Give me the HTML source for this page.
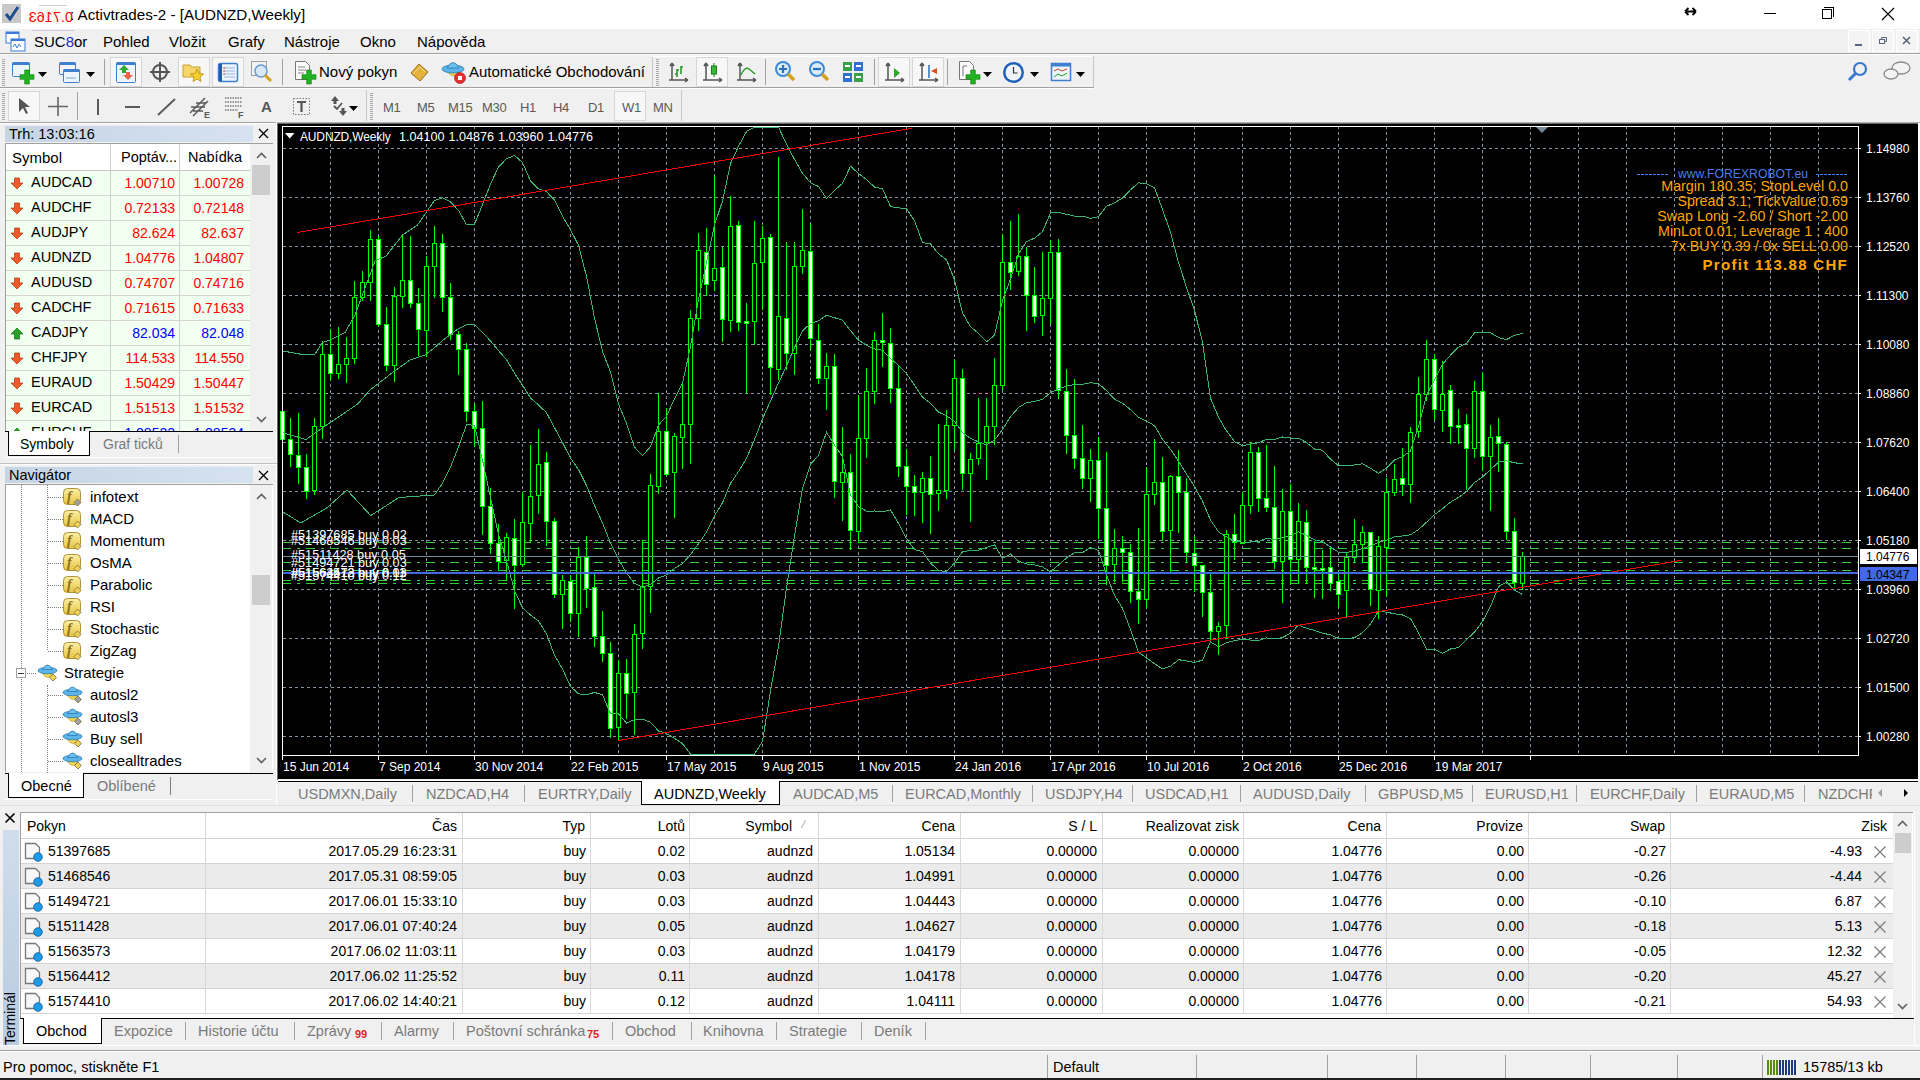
<!DOCTYPE html><html><head><meta charset="utf-8"><style>
*{margin:0;padding:0;box-sizing:border-box}
html,body{width:1920px;height:1080px;overflow:hidden;background:#f0f0f0;font-family:"Liberation Sans",sans-serif;font-size:14px;color:#000}
.a{position:absolute}
.t{position:absolute;white-space:nowrap;line-height:1}
.pb{position:absolute;border:1px solid #d6d6d6;background:#f7f7f7}
.tf{position:absolute;white-space:nowrap;line-height:1;font-size:13px;color:#5a5a5a;letter-spacing:-0.3px}
.sep{position:absolute;width:1px;background:#a0a0a0}
.grip{position:absolute;width:3px;background:repeating-linear-gradient(#a8a8a8 0 1px,transparent 1px 2px)}
</style></head><body>
<div class="a" style="left:0;top:0;width:1920px;height:29px;background:#fff"></div>
<div class="a" style="left:2px;top:4px;width:19px;height:19px;background:#c8c8c8"></div>
<svg class="a" style="left:2px;top:4px" width="19" height="19"><path d="M4 10 L8 15 L16 3" stroke="#1d4f8f" stroke-width="3" fill="none"/></svg>
<div class="a" style="left:30px;top:3px;width:44px;height:24px;background:radial-gradient(#f4f8e8,#fff 70%)"></div>
<div class="a" style="left:39px;top:5px;width:28px;height:1px;background:#d8c8e0"></div><div class="a" style="left:32px;top:30px;width:43px;height:1px;background:#d8c8e0"></div>
<div class="t" style="left:29px;top:10px;font-size:14.5px;color:#f00;transform:scaleX(-1);transform-origin:22px 0">0.7163</div>
<div class="t" style="left:70px;top:7px;font-size:15.2px">: Activtrades-2 - [AUDNZD,Weekly]</div>
<svg class="a" style="left:1684px;top:7px" width="13" height="9"><path d="M1 4.5H12M1 4.5L4.5 1M1 4.5L4.5 8M12 4.5L8.5 1M12 4.5L8.5 8" stroke="#000" stroke-width="1.8" fill="none"/></svg>
<div class="a" style="left:1764px;top:13px;width:12px;height:1px;background:#000"></div>
<div class="a" style="left:1822px;top:9px;width:10px;height:10px;border:1px solid #000;background:#fff"></div><div class="a" style="left:1824px;top:7px;width:10px;height:10px;border-top:1px solid #000;border-right:1px solid #000"></div>
<svg class="a" style="left:1881px;top:7px" width="14" height="14"><path d="M1 1L13 13M13 1L1 13" stroke="#000" stroke-width="1.2"/></svg>
<svg class="a" style="left:5px;top:31px" width="22" height="22"><rect x="1" y="1" width="13" height="11" fill="#fff" stroke="#3b7bd6"/><rect x="1" y="1" width="13" height="2" fill="#3b7bd6"/><rect x="6" y="8" width="14" height="12" fill="#fff" stroke="#3b7bd6"/><rect x="6" y="8" width="14" height="2" fill="#3b7bd6"/><path d="M8 16l2-3 2 4 2-4 2 3" stroke="#3b7bd6" fill="none"/></svg>
<div class="t" style="left:34px;top:34px;font-size:15px">SUC<span style='color:#2030c0'>8</span>or</div>
<div class="t" style="left:103px;top:34px;font-size:15px">Pohled</div>
<div class="t" style="left:169px;top:34px;font-size:15px">Vložit</div>
<div class="t" style="left:228px;top:34px;font-size:15px">Grafy</div>
<div class="t" style="left:284px;top:34px;font-size:15px">Nástroje</div>
<div class="t" style="left:360px;top:34px;font-size:15px">Okno</div>
<div class="t" style="left:417px;top:34px;font-size:15px">Nápověda</div>
<div class="a" style="left:1848px;top:30px;width:22px;height:22px;background:#f4f4f4;border:1px solid #fff"></div>
<div class="a" style="left:1872px;top:30px;width:22px;height:22px;background:#f4f4f4;border:1px solid #fff"></div>
<div class="a" style="left:1896px;top:30px;width:22px;height:22px;background:#f4f4f4;border:1px solid #fff"></div>
<div class="a" style="left:1855px;top:44px;width:7px;height:2px;background:#56657a"></div>
<svg class="a" style="left:1878px;top:35px" width="12" height="12"><rect x="1.5" y="4.5" width="5" height="4" fill="none" stroke="#56657a"/><path d="M3.5 4.5V2.5H8.5V6.5H6.5" fill="none" stroke="#56657a"/></svg>
<svg class="a" style="left:1902px;top:36px" width="10" height="10"><path d="M1 1L8 8M8 1L1 8" stroke="#56657a" stroke-width="1.6"/></svg>
<div class="a" style="left:0;top:53px;width:1920px;height:1px;background:#a0a0a0"></div>
<div class="a" style="left:0;top:54px;width:1920px;height:1px;background:#fff"></div>
<div class="a" style="left:0;top:87px;width:1094px;height:1px;background:#a0a0a0"></div>
<div class="a" style="left:0;top:88px;width:1094px;height:1px;background:#fff"></div>
<div class="a" style="left:0;top:122px;width:1920px;height:1px;background:#a0a0a0"></div><div class="a" style="left:0;top:123px;width:277px;height:1px;background:#fff"></div>
<div class="grip" style="left:2px;top:59px;height:28px"></div>
<div class="grip" style="left:656px;top:59px;height:28px"></div>
<div class="sep" style="left:652px;top:56px;height:31px;background:#c8c8c8"></div>
<div class="sep" style="left:1093px;top:56px;height:31px;background:#c8c8c8"></div>
<div class="a" style="left:652px;top:56px;width:441px;height:1px;background:#fff"></div>
<div class="sep" style="left:104px;top:59px;height:26px"></div>
<div class="sep" style="left:282px;top:59px;height:26px"></div>
<div class="sep" style="left:765px;top:59px;height:26px"></div>
<div class="sep" style="left:874px;top:59px;height:26px"></div>
<div class="sep" style="left:947px;top:59px;height:26px"></div>
<div class="pb" style="left:110px;top:57px;width:32px;height:30px"></div>
<div class="pb" style="left:178px;top:57px;width:32px;height:30px"></div>
<div class="pb" style="left:212px;top:57px;width:32px;height:30px"></div>
<div class="pb" style="left:696px;top:57px;width:32px;height:30px"></div>
<div class="pb" style="left:878px;top:57px;width:32px;height:30px"></div>
<div class="pb" style="left:912px;top:57px;width:32px;height:30px"></div>
<svg class="a" style="left:11px;top:61px" width="24" height="24"><rect x="1.5" y="1.5" width="17" height="14" rx="1" fill="#eef4fc" stroke="#3f7fd0"/><rect x="1.5" y="1.5" width="17" height="2.5" fill="#3f7fd0"/><path d="M13.666666666666668 9h4.666666666666667v4.666666666666667h4.666666666666667v4.666666666666667h-4.666666666666667v4.666666666666667h-4.666666666666667v-4.666666666666667h-4.666666666666667v-4.666666666666667h4.666666666666667z" fill="#22b222" stroke="#0d7a0d" stroke-width=".6"/></svg>
<svg class="a" style="left:38px;top:72px" width="9" height="5"><path d="M0 0H9L4.5 5Z" fill="#000"/></svg>
<svg class="a" style="left:58px;top:61px" width="24" height="24"><rect x="1.5" y="1.5" width="16" height="12" rx="1" fill="#eef4fc" stroke="#3f7fd0"/><rect x="1.5" y="1.5" width="16" height="2.5" fill="#3f7fd0"/><rect x="5.5" y="8.5" width="16" height="13" rx="1" fill="#eef4fc" stroke="#3f7fd0"/><rect x="5.5" y="8.5" width="16" height="2.5" fill="#3f7fd0"/><path d="M8 17h10" stroke="#7da6d8"/></svg>
<svg class="a" style="left:86px;top:72px" width="9" height="5"><path d="M0 0H9L4.5 5Z" fill="#000"/></svg>
<svg class="a" style="left:114px;top:61px" width="24" height="24"><rect x="2.5" y="1.5" width="19" height="20" rx="1" fill="#eef4fc" stroke="#3f7fd0"/><rect x="2.5" y="1.5" width="19" height="2.5" fill="#3f7fd0"/><path d="M10 4l-5 5h3v3h4V9h3z" fill="#2fa82f"/><path d="M14 19l5-5h-3v-3h-4v3H9z" fill="#f0643c"/></svg>
<svg class="a" style="left:149px;top:61px" width="22" height="22"><circle cx="11" cy="11" r="7" fill="none" stroke="#555" stroke-width="2"/><path d="M11 1v20M1 11h20" stroke="#555" stroke-width="2"/></svg>
<svg class="a" style="left:182px;top:61px" width="24" height="24"><path d="M1 4h7l2 2h8v10H1z" fill="#f5d66a" stroke="#c9a22a"/><path d="M15 8l2 4.5 4.5.5-3.5 3 1 4.5-4-2.5-4 2.5 1-4.5-3.5-3 4.5-.5z" fill="#f3d12a" stroke="#b88a10" stroke-width=".8"/></svg>
<svg class="a" style="left:216px;top:61px" width="24" height="24"><rect x="2.5" y="2.5" width="19" height="18" rx="2" fill="#eef4fc" stroke="#3f7fd0" stroke-width="1.5"/><rect x="3" y="3" width="3" height="17" fill="#1f5ba8"/><path d="M8 7h11M8 10h11M8 13h11M8 16h11" stroke="#9ab8e0"/><path d="M7 7h2M7 10h2M7 13h2" stroke="#e04040"/></svg>
<svg class="a" style="left:250px;top:60px" width="24" height="25"><rect x="1.5" y="1.5" width="15" height="14" fill="#f2f2f2" stroke="#a0a0a0"/><circle cx="11" cy="11" r="6" fill="#d8e8f6" stroke="#6a9ad0" stroke-width="1.5"/><path d="M15 15l6 6" stroke="#d4a020" stroke-width="3"/></svg>
<svg class="a" style="left:293px;top:60px" width="24" height="25"><path d="M2.5 1.5h10l4 4v14h-14z" fill="#fafafa" stroke="#777"/><path d="M5 7h7M5 10h8M5 13h6" stroke="#888"/><path d="M13.666666666666668 10h4.666666666666667v4.666666666666667h4.666666666666667v4.666666666666667h-4.666666666666667v4.666666666666667h-4.666666666666667v-4.666666666666667h-4.666666666666667v-4.666666666666667h4.666666666666667z" fill="#22b222" stroke="#0d7a0d" stroke-width=".6"/></svg>
<div class="t" style="left:319px;top:64px;font-size:15px">Nový pokyn</div>
<svg class="a" style="left:408px;top:61px" width="22" height="22"><path d="M3 12l8-9 9 8-8 9z" fill="#e2b23a" stroke="#9a6f10"/><path d="M5 13l7-7 5 5" stroke="#f7dd85" fill="none"/></svg>
<svg class="a" style="left:441px;top:59px" width="26" height="26"><path d="M6 12q7 10 13 0z" fill="#f3d84a" stroke="#b09030" stroke-width=".7"/><ellipse cx="12" cy="10" rx="11" ry="4" fill="#5db4e8" stroke="#2a7ab0" stroke-width=".8"/><path d="M6 9q6-11 12 0z" fill="#6cc0f0" stroke="#2a7ab0" stroke-width=".8"/><circle cx="19" cy="19" r="5.5" fill="#e53030" stroke="#a01010" stroke-width=".6"/><rect x="17" y="17" width="4" height="4" fill="#fff"/></svg>
<div class="t" style="left:469px;top:64px;font-size:15px">Automatické Obchodování</div>
<svg class="a" style="left:668px;top:61px" width="22" height="22"><path d="M4 2v17M1 19h19M4 2l-2 3M4 2l2 3M20 19l-3-2M20 19l-3 2" stroke="#555" stroke-width="1.5" fill="none"/><path d="M9 8v8M9 13h-2M9 9h2M13 5v8M13 6h2" stroke="#2a9a2a" stroke-width="1.6"/></svg>
<svg class="a" style="left:702px;top:61px" width="22" height="22"><path d="M4 2v17M1 19h19M4 2l-2 3M4 2l2 3M20 19l-3-2M20 19l-3 2" stroke="#555" stroke-width="1.5" fill="none"/><path d="M12 2v14" stroke="#1a7a1a"/><rect x="9.5" y="5" width="5" height="8" fill="#38b838" stroke="#1a7a1a"/></svg>
<svg class="a" style="left:736px;top:61px" width="22" height="22"><path d="M4 2v17M1 19h19M4 2l-2 3M4 2l2 3M20 19l-3-2M20 19l-3 2" stroke="#555" stroke-width="1.5" fill="none"/><path d="M5 14q4-9 8-6t6 5" stroke="#2a9a2a" stroke-width="1.5" fill="none"/></svg>
<svg class="a" style="left:774px;top:60px" width="24" height="24"><circle cx="9" cy="9" r="7" fill="#d9ecfb" stroke="#3f8ad8" stroke-width="2"/><path d="M5 9h8M9 5v8" stroke="#2a6fc0" stroke-width="2.2"/><path d="M14 14l6 6" stroke="#d4a020" stroke-width="3.5"/></svg>
<svg class="a" style="left:808px;top:60px" width="24" height="24"><circle cx="9" cy="9" r="7" fill="#d9ecfb" stroke="#3f8ad8" stroke-width="2"/><path d="M5 9h8" stroke="#2a6fc0" stroke-width="2.2"/><path d="M14 14l6 6" stroke="#d4a020" stroke-width="3.5"/></svg>
<svg class="a" style="left:842px;top:61px" width="22" height="22"><rect x="1" y="1" width="9" height="9" fill="#3aa04a"/><rect x="12" y="1" width="9" height="9" fill="#2f6fd0"/><rect x="1" y="12" width="9" height="9" fill="#2f6fd0"/><rect x="12" y="12" width="9" height="9" fill="#3aa04a"/><path d="M3 5h5M14 5h5M3 16h5M14 16h5" stroke="#fff" stroke-width="2"/></svg>
<svg class="a" style="left:884px;top:61px" width="22" height="22"><path d="M4 2v17M1 19h19M4 2l-2 3M4 2l2 3M20 19l-3-2M20 19l-3 2" stroke="#555" stroke-width="1.5" fill="none"/><path d="M10 7l6 5-6 5z" fill="#2aa82a"/></svg>
<svg class="a" style="left:918px;top:61px" width="22" height="22"><path d="M4 2v17M1 19h19M4 2l-2 3M4 2l2 3M20 19l-3-2M20 19l-3 2" stroke="#555" stroke-width="1.5" fill="none"/><path d="M11 4v13" stroke="#2a6fc0" stroke-width="1.5"/><path d="M13 10l6-3v6z" fill="#e05020"/></svg>
<svg class="a" style="left:957px;top:60px" width="24" height="25"><path d="M2.5 1.5h10l4 4v14h-14z" fill="#fafafa" stroke="#777"/><path d="M6 6h4M6 6v10" stroke="#777"/><path d="M13.666666666666668 10h4.666666666666667v4.666666666666667h4.666666666666667v4.666666666666667h-4.666666666666667v4.666666666666667h-4.666666666666667v-4.666666666666667h-4.666666666666667v-4.666666666666667h4.666666666666667z" fill="#22b222" stroke="#0d7a0d" stroke-width=".6"/></svg>
<svg class="a" style="left:983px;top:72px" width="9" height="5"><path d="M0 0H9L4.5 5Z" fill="#000"/></svg>
<svg class="a" style="left:1002px;top:61px" width="23" height="23"><circle cx="11.5" cy="11.5" r="10.5" fill="#1f5fb8"/><circle cx="11.5" cy="11.5" r="8" fill="#eef4fa"/><path d="M11.5 6v6h4" stroke="#333" stroke-width="1.2" fill="none"/></svg>
<svg class="a" style="left:1030px;top:72px" width="9" height="5"><path d="M0 0H9L4.5 5Z" fill="#000"/></svg>
<svg class="a" style="left:1050px;top:61px" width="22" height="22"><rect x="1.5" y="2.5" width="19" height="17" fill="#eef4fc" stroke="#3f7fd0" stroke-width="1.5"/><rect x="1.5" y="2.5" width="19" height="3" fill="#3f7fd0"/><path d="M4 10l4-2 4 2 5-2" stroke="#c04020" fill="none"/><path d="M4 16l4-3 4 2 5-3" stroke="#20a020" fill="none"/></svg>
<svg class="a" style="left:1076px;top:72px" width="9" height="5"><path d="M0 0H9L4.5 5Z" fill="#000"/></svg>
<svg class="a" style="left:1847px;top:61px" width="22" height="22"><circle cx="13" cy="8" r="6" fill="none" stroke="#3a78d0" stroke-width="2.2"/><path d="M9 12l-7 7" stroke="#3a78d0" stroke-width="3"/></svg>
<svg class="a" style="left:1882px;top:60px" width="30" height="24"><ellipse cx="19" cy="8" rx="9" ry="6" fill="#f4f4f4" stroke="#8a8a8a" stroke-width="1.3"/><ellipse cx="9" cy="14" rx="7" ry="5" fill="#f4f4f4" stroke="#8a8a8a" stroke-width="1.3"/></svg>
<div class="grip" style="left:2px;top:93px;height:28px"></div>
<div class="grip" style="left:370px;top:93px;height:28px"></div>
<div class="sep" style="left:366px;top:90px;height:31px;background:#c8c8c8"></div>
<div class="sep" style="left:681px;top:90px;height:31px;background:#c8c8c8"></div>
<div class="sep" style="left:77px;top:92px;height:28px"></div>
<div class="pb" style="left:8px;top:91px;width:32px;height:30px"></div>
<div class="pb" style="left:614px;top:91px;width:32px;height:30px"></div>
<svg class="a" style="left:16px;top:96px" width="16" height="20"><path d="M3 2v14l4-4 3 6 2-1-3-6h5z" fill="#555"/></svg>
<svg class="a" style="left:47px;top:96px" width="22" height="22"><path d="M11 1v19M1 10.5h20" stroke="#666" stroke-width="1.6"/></svg>
<div class="a" style="left:97px;top:99px;width:2px;height:16px;background:#5a5a5a"></div>
<div class="a" style="left:125px;top:106px;width:15px;height:2px;background:#5a5a5a"></div>
<svg class="a" style="left:157px;top:97px" width="20" height="20"><path d="M1 18L18 2" stroke="#5a5a5a" stroke-width="1.8"/></svg>
<svg class="a" style="left:189px;top:95px" width="24" height="24"><path d="M1 18L16 3M4 21L19 6M2 12h14M4 16h10M7 8h10" stroke="#5a5a5a" stroke-width="1.5"/><text x="15" y="23" font-size="9" font-weight="bold" fill="#5a5a5a" font-family="Liberation Sans">E</text></svg>
<svg class="a" style="left:224px;top:95px" width="24" height="24"><path d="M1 3h17M1 7h17M1 11h17M1 15h13" stroke="#777" stroke-dasharray="1.5 1" stroke-width="1.5"/><text x="14" y="23" font-size="9" font-weight="bold" fill="#5a5a5a" font-family="Liberation Sans">F</text></svg>
<div class="t" style="left:261px;top:99px;font-size:15px;font-weight:bold;color:#555">A</div>
<svg class="a" style="left:292px;top:97px" width="20" height="20"><rect x="1.5" y="1.5" width="16" height="16" fill="none" stroke="#777" stroke-dasharray="1.5 1.5"/><path d="M5 5h9M9.5 5v10" stroke="#555" stroke-width="2.2"/></svg>
<svg class="a" style="left:330px;top:95px" width="20" height="22"><path d="M5 1l4 5H6.5v3h-3V6H1z" fill="#555"/><path d="M4 11l3 3 5-6" stroke="#555" stroke-width="1.8" fill="none"/><path d="M13 21l4-5h-2.5v-3h-3v3H9z" fill="#555"/></svg>
<svg class="a" style="left:349px;top:106px" width="9" height="5"><path d="M0 0H9L4.5 5Z" fill="#000"/></svg>
<div class="tf" style="left:383px;top:101px">M1</div>
<div class="tf" style="left:417px;top:101px">M5</div>
<div class="tf" style="left:448px;top:101px">M15</div>
<div class="tf" style="left:482px;top:101px">M30</div>
<div class="tf" style="left:520px;top:101px">H1</div>
<div class="tf" style="left:553px;top:101px">H4</div>
<div class="tf" style="left:588px;top:101px">D1</div>
<div class="tf" style="left:622px;top:101px">W1</div>
<div class="tf" style="left:653px;top:101px">MN</div>
<div class="a" style="left:276px;top:122px;width:1px;height:684px;background:#fff"></div>
<div class="a" style="left:5px;top:126px;width:248px;height:16px;background:linear-gradient(90deg,#c6d4e4,#d6e2f0)"></div>
<div class="t" style="left:9px;top:127px;font-size:14.5px">Trh: 13:03:16</div>
<svg class="a" style="left:258px;top:128px" width="11" height="11"><path d="M1 1L10 10M10 1L1 10" stroke="#000" stroke-width="1.3"/></svg>
<div class="a" style="left:5px;top:143px;width:268px;height:289px;background:#f0f0f0;border-top:1px solid #a0a0a0;border-left:1px solid #a0a0a0"></div>
<div class="a" style="left:6px;top:144px;width:244px;height:26px;background:#fff"></div>
<div class="a" style="left:6px;top:170px;width:244px;height:262px;background:#f0fff0"></div>
<div class="a" style="left:110px;top:144px;width:1px;height:288px;background:#d0d0d0"></div>
<div class="a" style="left:179px;top:144px;width:1px;height:288px;background:#d0d0d0"></div>
<div class="a" style="left:6px;top:170px;width:244px;height:1px;background:#c8c8c8"></div>
<div class="t" style="left:12px;top:150px;font-size:15px">Symbol</div>
<div class="t" style="left:121px;top:150px;font-size:14.5px">Poptáv...</div>
<div class="t" style="left:188px;top:150px;font-size:14.5px">Nabídka</div>
<div class="a" style="left:6px;top:195px;width:244px;height:1px;background:#d4d4d4"></div>
<svg class="a" style="left:10px;top:177px" width="15" height="13"><path d="M7 12L13 6H9.5V1H4.5V6H1Z" fill="#ef5a2a" stroke="#b53010" stroke-width=".7"/></svg>
<div class="t" style="left:31px;top:175px;font-size:14.5px">AUDCAD</div>
<div class="t" style="right:1745px;top:176px;color:#ff0000">1.00710</div>
<div class="t" style="right:1676px;top:176px;color:#ff0000">1.00728</div>
<div class="a" style="left:6px;top:220px;width:244px;height:1px;background:#d4d4d4"></div>
<svg class="a" style="left:10px;top:202px" width="15" height="13"><path d="M7 12L13 6H9.5V1H4.5V6H1Z" fill="#ef5a2a" stroke="#b53010" stroke-width=".7"/></svg>
<div class="t" style="left:31px;top:200px;font-size:14.5px">AUDCHF</div>
<div class="t" style="right:1745px;top:201px;color:#ff0000">0.72133</div>
<div class="t" style="right:1676px;top:201px;color:#ff0000">0.72148</div>
<div class="a" style="left:6px;top:245px;width:244px;height:1px;background:#d4d4d4"></div>
<svg class="a" style="left:10px;top:227px" width="15" height="13"><path d="M7 12L13 6H9.5V1H4.5V6H1Z" fill="#ef5a2a" stroke="#b53010" stroke-width=".7"/></svg>
<div class="t" style="left:31px;top:225px;font-size:14.5px">AUDJPY</div>
<div class="t" style="right:1745px;top:226px;color:#ff0000">82.624</div>
<div class="t" style="right:1676px;top:226px;color:#ff0000">82.637</div>
<div class="a" style="left:6px;top:270px;width:244px;height:1px;background:#d4d4d4"></div>
<svg class="a" style="left:10px;top:252px" width="15" height="13"><path d="M7 12L13 6H9.5V1H4.5V6H1Z" fill="#ef5a2a" stroke="#b53010" stroke-width=".7"/></svg>
<div class="t" style="left:31px;top:250px;font-size:14.5px">AUDNZD</div>
<div class="t" style="right:1745px;top:251px;color:#ff0000">1.04776</div>
<div class="t" style="right:1676px;top:251px;color:#ff0000">1.04807</div>
<div class="a" style="left:6px;top:295px;width:244px;height:1px;background:#d4d4d4"></div>
<svg class="a" style="left:10px;top:277px" width="15" height="13"><path d="M7 12L13 6H9.5V1H4.5V6H1Z" fill="#ef5a2a" stroke="#b53010" stroke-width=".7"/></svg>
<div class="t" style="left:31px;top:275px;font-size:14.5px">AUDUSD</div>
<div class="t" style="right:1745px;top:276px;color:#ff0000">0.74707</div>
<div class="t" style="right:1676px;top:276px;color:#ff0000">0.74716</div>
<div class="a" style="left:6px;top:320px;width:244px;height:1px;background:#d4d4d4"></div>
<svg class="a" style="left:10px;top:302px" width="15" height="13"><path d="M7 12L13 6H9.5V1H4.5V6H1Z" fill="#ef5a2a" stroke="#b53010" stroke-width=".7"/></svg>
<div class="t" style="left:31px;top:300px;font-size:14.5px">CADCHF</div>
<div class="t" style="right:1745px;top:301px;color:#ff0000">0.71615</div>
<div class="t" style="right:1676px;top:301px;color:#ff0000">0.71633</div>
<div class="a" style="left:6px;top:345px;width:244px;height:1px;background:#d4d4d4"></div>
<svg class="a" style="left:10px;top:327px" width="15" height="13"><path d="M7 1L13 7H9.5V12H4.5V7H1Z" fill="#2aa02a" stroke="#137013" stroke-width=".7"/></svg>
<div class="t" style="left:31px;top:325px;font-size:14.5px">CADJPY</div>
<div class="t" style="right:1745px;top:326px;color:#0000ff">82.034</div>
<div class="t" style="right:1676px;top:326px;color:#0000ff">82.048</div>
<div class="a" style="left:6px;top:370px;width:244px;height:1px;background:#d4d4d4"></div>
<svg class="a" style="left:10px;top:352px" width="15" height="13"><path d="M7 12L13 6H9.5V1H4.5V6H1Z" fill="#ef5a2a" stroke="#b53010" stroke-width=".7"/></svg>
<div class="t" style="left:31px;top:350px;font-size:14.5px">CHFJPY</div>
<div class="t" style="right:1745px;top:351px;color:#ff0000">114.533</div>
<div class="t" style="right:1676px;top:351px;color:#ff0000">114.550</div>
<div class="a" style="left:6px;top:395px;width:244px;height:1px;background:#d4d4d4"></div>
<svg class="a" style="left:10px;top:377px" width="15" height="13"><path d="M7 12L13 6H9.5V1H4.5V6H1Z" fill="#ef5a2a" stroke="#b53010" stroke-width=".7"/></svg>
<div class="t" style="left:31px;top:375px;font-size:14.5px">EURAUD</div>
<div class="t" style="right:1745px;top:376px;color:#ff0000">1.50429</div>
<div class="t" style="right:1676px;top:376px;color:#ff0000">1.50447</div>
<div class="a" style="left:6px;top:420px;width:244px;height:1px;background:#d4d4d4"></div>
<svg class="a" style="left:10px;top:402px" width="15" height="13"><path d="M7 12L13 6H9.5V1H4.5V6H1Z" fill="#ef5a2a" stroke="#b53010" stroke-width=".7"/></svg>
<div class="t" style="left:31px;top:400px;font-size:14.5px">EURCAD</div>
<div class="t" style="right:1745px;top:401px;color:#ff0000">1.51513</div>
<div class="t" style="right:1676px;top:401px;color:#ff0000">1.51532</div>
<div class="a" style="left:6px;top:445px;width:244px;height:1px;background:#d4d4d4"></div>
<svg class="a" style="left:10px;top:427px" width="15" height="13"><path d="M7 1L13 7H9.5V12H4.5V7H1Z" fill="#2aa02a" stroke="#137013" stroke-width=".7"/></svg>
<div class="t" style="left:31px;top:425px;font-size:14.5px">EURCHF</div>
<div class="t" style="right:1745px;top:426px;color:#0000ff">1.08523</div>
<div class="t" style="right:1676px;top:426px;color:#0000ff">1.08534</div>
<div class="a" style="left:5px;top:431px;width:268px;height:27px;background:#f0f0f0;border-top:1px solid #000"></div>
<div class="a" style="left:250px;top:144px;width:22px;height:287px;background:#f0f0f0"></div>
<svg class="a" style="left:256px;top:152px" width="11" height="7"><path d="M1 6L5.5 1.5L10 6" stroke="#606060" stroke-width="1.6" fill="none"/></svg>
<svg class="a" style="left:256px;top:416px" width="11" height="7"><path d="M1 1L5.5 5.5L10 1" stroke="#606060" stroke-width="1.6" fill="none"/></svg>
<div class="a" style="left:252px;top:165px;width:18px;height:30px;background:#cdcdcd"></div>
<div class="a" style="left:8px;top:431px;width:82px;height:25px;background:#fff;border:1px solid #000;border-top:none"></div>
<div class="t" style="left:20px;top:437px">Symboly</div>
<div class="t" style="left:103px;top:437px;color:#7a7a7a">Graf ticků</div>
<div class="a" style="left:178px;top:435px;width:1px;height:18px;background:#a0a0a0"></div>
<div class="a" style="left:5px;top:457px;width:268px;height:1px;background:#fff"></div>
<div class="a" style="left:0;top:463px;width:277px;height:1px;background:#c0c0c0"></div>
<div class="a" style="left:0;top:464px;width:277px;height:1px;background:#fff"></div>
<div class="a" style="left:5px;top:467px;width:248px;height:16px;background:linear-gradient(90deg,#c6d4e4,#d6e2f0)"></div>
<div class="t" style="left:9px;top:468px;font-size:14.5px">Navigátor</div>
<svg class="a" style="left:258px;top:470px" width="11" height="11"><path d="M1 1L10 10M10 1L1 10" stroke="#000" stroke-width="1.3"/></svg>
<div class="a" style="left:5px;top:484px;width:268px;height:288px;background:#fff;border-top:1px solid #a0a0a0;border-left:1px solid #a0a0a0"></div>
<div class="a" style="left:250px;top:485px;width:22px;height:287px;background:#f0f0f0"></div>
<svg class="a" style="left:256px;top:493px" width="11" height="7"><path d="M1 6L5.5 1.5L10 6" stroke="#606060" stroke-width="1.6" fill="none"/></svg>
<svg class="a" style="left:256px;top:757px" width="11" height="7"><path d="M1 1L5.5 5.5L10 1" stroke="#606060" stroke-width="1.6" fill="none"/></svg>
<div class="a" style="left:252px;top:575px;width:18px;height:30px;background:#cdcdcd"></div>
<div class="a" style="left:21px;top:485px;width:1px;height:287px;border-left:1px dotted #808080"></div>
<div class="a" style="left:47px;top:485px;width:1px;height:165px;border-left:1px dotted #808080"></div>
<div class="a" style="left:47px;top:685px;width:1px;height:88px;border-left:1px dotted #808080"></div>
<div class="a" style="left:48px;top:497px;width:15px;height:1px;border-top:1px dotted #808080"></div>
<svg class="a" style="left:62px;top:487px" width="22" height="20"><defs><linearGradient id="gy" x1="0" y1="0" x2="0" y2="1"><stop offset="0" stop-color="#fbf0a8"/><stop offset="1" stop-color="#e6c43c"/></linearGradient></defs><rect x="1.5" y="1.5" width="17" height="16" rx="4" fill="url(#gy)" stroke="#b0923a"/><text x="5" y="14" font-size="14" font-style="italic" font-weight="bold" font-family="Liberation Serif" fill="#8a7020">f</text><path d="M15.5 12l3.5 3.5-3.5 3.5-3.5-3.5z" fill="#a0a0a0" stroke="#8a7a50" stroke-width=".9"/></svg>
<div class="t" style="left:90px;top:489px;font-size:15px">infotext</div>
<div class="a" style="left:48px;top:519px;width:15px;height:1px;border-top:1px dotted #808080"></div>
<svg class="a" style="left:62px;top:509px" width="22" height="20"><defs><linearGradient id="gy" x1="0" y1="0" x2="0" y2="1"><stop offset="0" stop-color="#fbf0a8"/><stop offset="1" stop-color="#e6c43c"/></linearGradient></defs><rect x="1.5" y="1.5" width="17" height="16" rx="4" fill="url(#gy)" stroke="#b0923a"/><text x="5" y="14" font-size="14" font-style="italic" font-weight="bold" font-family="Liberation Serif" fill="#8a7020">f</text><path d="M15.5 12l3.5 3.5-3.5 3.5-3.5-3.5z" fill="#f0d050" stroke="#8a7a50" stroke-width=".9"/></svg>
<div class="t" style="left:90px;top:511px;font-size:15px">MACD</div>
<div class="a" style="left:48px;top:541px;width:15px;height:1px;border-top:1px dotted #808080"></div>
<svg class="a" style="left:62px;top:531px" width="22" height="20"><defs><linearGradient id="gy" x1="0" y1="0" x2="0" y2="1"><stop offset="0" stop-color="#fbf0a8"/><stop offset="1" stop-color="#e6c43c"/></linearGradient></defs><rect x="1.5" y="1.5" width="17" height="16" rx="4" fill="url(#gy)" stroke="#b0923a"/><text x="5" y="14" font-size="14" font-style="italic" font-weight="bold" font-family="Liberation Serif" fill="#8a7020">f</text><path d="M15.5 12l3.5 3.5-3.5 3.5-3.5-3.5z" fill="#f0d050" stroke="#8a7a50" stroke-width=".9"/></svg>
<div class="t" style="left:90px;top:533px;font-size:15px">Momentum</div>
<div class="a" style="left:48px;top:563px;width:15px;height:1px;border-top:1px dotted #808080"></div>
<svg class="a" style="left:62px;top:553px" width="22" height="20"><defs><linearGradient id="gy" x1="0" y1="0" x2="0" y2="1"><stop offset="0" stop-color="#fbf0a8"/><stop offset="1" stop-color="#e6c43c"/></linearGradient></defs><rect x="1.5" y="1.5" width="17" height="16" rx="4" fill="url(#gy)" stroke="#b0923a"/><text x="5" y="14" font-size="14" font-style="italic" font-weight="bold" font-family="Liberation Serif" fill="#8a7020">f</text><path d="M15.5 12l3.5 3.5-3.5 3.5-3.5-3.5z" fill="#f0d050" stroke="#8a7a50" stroke-width=".9"/></svg>
<div class="t" style="left:90px;top:555px;font-size:15px">OsMA</div>
<div class="a" style="left:48px;top:585px;width:15px;height:1px;border-top:1px dotted #808080"></div>
<svg class="a" style="left:62px;top:575px" width="22" height="20"><defs><linearGradient id="gy" x1="0" y1="0" x2="0" y2="1"><stop offset="0" stop-color="#fbf0a8"/><stop offset="1" stop-color="#e6c43c"/></linearGradient></defs><rect x="1.5" y="1.5" width="17" height="16" rx="4" fill="url(#gy)" stroke="#b0923a"/><text x="5" y="14" font-size="14" font-style="italic" font-weight="bold" font-family="Liberation Serif" fill="#8a7020">f</text><path d="M15.5 12l3.5 3.5-3.5 3.5-3.5-3.5z" fill="#f0d050" stroke="#8a7a50" stroke-width=".9"/></svg>
<div class="t" style="left:90px;top:577px;font-size:15px">Parabolic</div>
<div class="a" style="left:48px;top:607px;width:15px;height:1px;border-top:1px dotted #808080"></div>
<svg class="a" style="left:62px;top:597px" width="22" height="20"><defs><linearGradient id="gy" x1="0" y1="0" x2="0" y2="1"><stop offset="0" stop-color="#fbf0a8"/><stop offset="1" stop-color="#e6c43c"/></linearGradient></defs><rect x="1.5" y="1.5" width="17" height="16" rx="4" fill="url(#gy)" stroke="#b0923a"/><text x="5" y="14" font-size="14" font-style="italic" font-weight="bold" font-family="Liberation Serif" fill="#8a7020">f</text><path d="M15.5 12l3.5 3.5-3.5 3.5-3.5-3.5z" fill="#f0d050" stroke="#8a7a50" stroke-width=".9"/></svg>
<div class="t" style="left:90px;top:599px;font-size:15px">RSI</div>
<div class="a" style="left:48px;top:629px;width:15px;height:1px;border-top:1px dotted #808080"></div>
<svg class="a" style="left:62px;top:619px" width="22" height="20"><defs><linearGradient id="gy" x1="0" y1="0" x2="0" y2="1"><stop offset="0" stop-color="#fbf0a8"/><stop offset="1" stop-color="#e6c43c"/></linearGradient></defs><rect x="1.5" y="1.5" width="17" height="16" rx="4" fill="url(#gy)" stroke="#b0923a"/><text x="5" y="14" font-size="14" font-style="italic" font-weight="bold" font-family="Liberation Serif" fill="#8a7020">f</text><path d="M15.5 12l3.5 3.5-3.5 3.5-3.5-3.5z" fill="#f0d050" stroke="#8a7a50" stroke-width=".9"/></svg>
<div class="t" style="left:90px;top:621px;font-size:15px">Stochastic</div>
<div class="a" style="left:48px;top:651px;width:15px;height:1px;border-top:1px dotted #808080"></div>
<svg class="a" style="left:62px;top:641px" width="22" height="20"><defs><linearGradient id="gy" x1="0" y1="0" x2="0" y2="1"><stop offset="0" stop-color="#fbf0a8"/><stop offset="1" stop-color="#e6c43c"/></linearGradient></defs><rect x="1.5" y="1.5" width="17" height="16" rx="4" fill="url(#gy)" stroke="#b0923a"/><text x="5" y="14" font-size="14" font-style="italic" font-weight="bold" font-family="Liberation Serif" fill="#8a7020">f</text><path d="M15.5 12l3.5 3.5-3.5 3.5-3.5-3.5z" fill="#f0d050" stroke="#8a7a50" stroke-width=".9"/></svg>
<div class="t" style="left:90px;top:643px;font-size:15px">ZigZag</div>
<div class="a" style="left:22px;top:673px;width:14px;height:1px;border-top:1px dotted #808080"></div>
<div class="a" style="left:16px;top:668px;width:10px;height:10px;background:#fff;border:1px solid #a0a0a0"></div><div class="a" style="left:18px;top:673px;width:6px;height:1px;background:#333"></div>
<svg class="a" style="left:37px;top:663px" width="22" height="20"><path d="M5 10q6 9 11 0z" fill="#f3d84a" stroke="#b09030" stroke-width=".6"/><ellipse cx="10.5" cy="7.5" rx="9.5" ry="3.3" fill="#5db4e8" stroke="#2a7ab0" stroke-width=".8"/><path d="M5.5 6.5q5-9 10 0z" fill="#6cc0f0" stroke="#2a7ab0" stroke-width=".8"/><path d="M16 11l3.5 3.5-3.5 3.5-3.5-3.5z" fill="#f0d050" stroke="#8a7a50" stroke-width=".9"/></svg>
<div class="t" style="left:64px;top:665px;font-size:15px">Strategie</div>
<div class="a" style="left:48px;top:695px;width:15px;height:1px;border-top:1px dotted #808080"></div>
<svg class="a" style="left:62px;top:685px" width="22" height="20"><path d="M5 10q6 9 11 0z" fill="#f3d84a" stroke="#b09030" stroke-width=".6"/><ellipse cx="10.5" cy="7.5" rx="9.5" ry="3.3" fill="#5db4e8" stroke="#2a7ab0" stroke-width=".8"/><path d="M5.5 6.5q5-9 10 0z" fill="#6cc0f0" stroke="#2a7ab0" stroke-width=".8"/><path d="M16 11l3.5 3.5-3.5 3.5-3.5-3.5z" fill="#a0a0a0" stroke="#8a7a50" stroke-width=".9"/></svg>
<div class="t" style="left:90px;top:687px;font-size:15px">autosl2</div>
<div class="a" style="left:48px;top:717px;width:15px;height:1px;border-top:1px dotted #808080"></div>
<svg class="a" style="left:62px;top:707px" width="22" height="20"><path d="M5 10q6 9 11 0z" fill="#f3d84a" stroke="#b09030" stroke-width=".6"/><ellipse cx="10.5" cy="7.5" rx="9.5" ry="3.3" fill="#5db4e8" stroke="#2a7ab0" stroke-width=".8"/><path d="M5.5 6.5q5-9 10 0z" fill="#6cc0f0" stroke="#2a7ab0" stroke-width=".8"/><path d="M16 11l3.5 3.5-3.5 3.5-3.5-3.5z" fill="#a0a0a0" stroke="#8a7a50" stroke-width=".9"/></svg>
<div class="t" style="left:90px;top:709px;font-size:15px">autosl3</div>
<div class="a" style="left:48px;top:739px;width:15px;height:1px;border-top:1px dotted #808080"></div>
<svg class="a" style="left:62px;top:729px" width="22" height="20"><path d="M5 10q6 9 11 0z" fill="#f3d84a" stroke="#b09030" stroke-width=".6"/><ellipse cx="10.5" cy="7.5" rx="9.5" ry="3.3" fill="#5db4e8" stroke="#2a7ab0" stroke-width=".8"/><path d="M5.5 6.5q5-9 10 0z" fill="#6cc0f0" stroke="#2a7ab0" stroke-width=".8"/><path d="M16 11l3.5 3.5-3.5 3.5-3.5-3.5z" fill="#f0d050" stroke="#8a7a50" stroke-width=".9"/></svg>
<div class="t" style="left:90px;top:731px;font-size:15px">Buy sell</div>
<div class="a" style="left:48px;top:761px;width:15px;height:1px;border-top:1px dotted #808080"></div>
<svg class="a" style="left:62px;top:751px" width="22" height="20"><path d="M5 10q6 9 11 0z" fill="#f3d84a" stroke="#b09030" stroke-width=".6"/><ellipse cx="10.5" cy="7.5" rx="9.5" ry="3.3" fill="#5db4e8" stroke="#2a7ab0" stroke-width=".8"/><path d="M5.5 6.5q5-9 10 0z" fill="#6cc0f0" stroke="#2a7ab0" stroke-width=".8"/><path d="M16 11l3.5 3.5-3.5 3.5-3.5-3.5z" fill="#f0d050" stroke="#8a7a50" stroke-width=".9"/></svg>
<div class="t" style="left:90px;top:753px;font-size:15px">closealltrades</div>
<div class="a" style="left:5px;top:773px;width:268px;height:27px;background:#f0f0f0;border-top:1px solid #000"></div>
<div class="a" style="left:8px;top:773px;width:76px;height:25px;background:#fff;border:1px solid #000;border-top:none"></div>
<div class="t" style="left:21px;top:779px;font-size:14.5px">Obecné</div>
<div class="t" style="left:97px;top:779px;font-size:14.5px;color:#7a7a7a">Oblíbené</div>
<div class="a" style="left:170px;top:777px;width:1px;height:18px;background:#808080"></div>
<div class="a" style="left:5px;top:799px;width:268px;height:1px;background:#fff"></div>
<div class="a" style="left:277px;top:122px;width:1643px;height:1px;background:#b0b0b0"></div>
<div class="a" style="left:277px;top:123px;width:1643px;height:1px;background:#686868"></div>
<div class="a" style="left:277px;top:123px;width:1px;height:657px;background:#696969"></div>
<div class="a" style="left:278px;top:124px;width:1640px;height:655px;background:#000"></div>
<div class="a" style="left:1918px;top:123px;width:2px;height:657px;background:#fff"></div>
<svg class="a" style="left:0;top:0;shape-rendering:crispEdges" width="1920" height="1080"><path d="M283 148.5H1858" stroke="#8494a4" stroke-dasharray="3 3"/><path d="M283 197.5H1858" stroke="#8494a4" stroke-dasharray="3 3"/><path d="M283 246.5H1858" stroke="#8494a4" stroke-dasharray="3 3"/><path d="M283 295.5H1858" stroke="#8494a4" stroke-dasharray="3 3"/><path d="M283 344.5H1858" stroke="#8494a4" stroke-dasharray="3 3"/><path d="M283 393.5H1858" stroke="#8494a4" stroke-dasharray="3 3"/><path d="M283 442.5H1858" stroke="#8494a4" stroke-dasharray="3 3"/><path d="M283 491.5H1858" stroke="#8494a4" stroke-dasharray="3 3"/><path d="M283 540.5H1858" stroke="#8494a4" stroke-dasharray="3 3"/><path d="M283 589.5H1858" stroke="#8494a4" stroke-dasharray="3 3"/><path d="M283 638.5H1858" stroke="#8494a4" stroke-dasharray="3 3"/><path d="M283 687.5H1858" stroke="#8494a4" stroke-dasharray="3 3"/><path d="M283 736.5H1858" stroke="#8494a4" stroke-dasharray="3 3"/><path d="M330.5 126V755" stroke="#8494a4" stroke-dasharray="3 3"/><path d="M378.5 126V755" stroke="#8494a4" stroke-dasharray="3 3"/><path d="M426.5 126V755" stroke="#8494a4" stroke-dasharray="3 3"/><path d="M474.5 126V755" stroke="#8494a4" stroke-dasharray="3 3"/><path d="M522.5 126V755" stroke="#8494a4" stroke-dasharray="3 3"/><path d="M570.5 126V755" stroke="#8494a4" stroke-dasharray="3 3"/><path d="M618.5 126V755" stroke="#8494a4" stroke-dasharray="3 3"/><path d="M666.5 126V755" stroke="#8494a4" stroke-dasharray="3 3"/><path d="M714.5 126V755" stroke="#8494a4" stroke-dasharray="3 3"/><path d="M762.5 126V755" stroke="#8494a4" stroke-dasharray="3 3"/><path d="M810.5 126V755" stroke="#8494a4" stroke-dasharray="3 3"/><path d="M858.5 126V755" stroke="#8494a4" stroke-dasharray="3 3"/><path d="M906.5 126V755" stroke="#8494a4" stroke-dasharray="3 3"/><path d="M954.5 126V755" stroke="#8494a4" stroke-dasharray="3 3"/><path d="M1002.5 126V755" stroke="#8494a4" stroke-dasharray="3 3"/><path d="M1050.5 126V755" stroke="#8494a4" stroke-dasharray="3 3"/><path d="M1098.5 126V755" stroke="#8494a4" stroke-dasharray="3 3"/><path d="M1146.5 126V755" stroke="#8494a4" stroke-dasharray="3 3"/><path d="M1194.5 126V755" stroke="#8494a4" stroke-dasharray="3 3"/><path d="M1242.5 126V755" stroke="#8494a4" stroke-dasharray="3 3"/><path d="M1290.5 126V755" stroke="#8494a4" stroke-dasharray="3 3"/><path d="M1338.5 126V755" stroke="#8494a4" stroke-dasharray="3 3"/><path d="M1386.5 126V755" stroke="#8494a4" stroke-dasharray="3 3"/><path d="M1434.5 126V755" stroke="#8494a4" stroke-dasharray="3 3"/><path d="M1482.5 126V755" stroke="#8494a4" stroke-dasharray="3 3"/><path d="M1530.5 126V755" stroke="#8494a4" stroke-dasharray="3 3"/><path d="M1578.5 126V755" stroke="#8494a4" stroke-dasharray="3 3"/><path d="M1626.5 126V755" stroke="#8494a4" stroke-dasharray="3 3"/><path d="M1674.5 126V755" stroke="#8494a4" stroke-dasharray="3 3"/><path d="M1722.5 126V755" stroke="#8494a4" stroke-dasharray="3 3"/><path d="M1770.5 126V755" stroke="#8494a4" stroke-dasharray="3 3"/><path d="M1818.5 126V755" stroke="#8494a4" stroke-dasharray="3 3"/><path d="M282 542.5H1858" stroke="#32cd32" stroke-dasharray="9 6 3 6"/><path d="M282 548.5H1858" stroke="#32cd32" stroke-dasharray="9 6 3 6"/><path d="M282 562.5H1858" stroke="#32cd32" stroke-dasharray="9 6 3 6"/><path d="M282 570.5H1858" stroke="#32cd32" stroke-dasharray="9 6 3 6"/><path d="M282 580.5H1858" stroke="#32cd32" stroke-dasharray="9 6 3 6"/><path d="M282 583.5H1858" stroke="#32cd32" stroke-dasharray="9 6 3 6"/><rect x="282" y="408" width="1" height="43" fill="#00ff00"/><rect x="280" y="411" width="5" height="29" fill="#00ff00"/><rect x="281" y="412" width="3" height="27" fill="#fff"/><rect x="290" y="418" width="1" height="49" fill="#00ff00"/><rect x="288" y="439" width="5" height="16" fill="#00ff00"/><rect x="289" y="440" width="3" height="14" fill="#fff"/><rect x="298" y="413" width="1" height="71" fill="#00ff00"/><rect x="296" y="455" width="5" height="13" fill="#00ff00"/><rect x="297" y="456" width="3" height="11" fill="#fff"/><rect x="306" y="454" width="1" height="45" fill="#00ff00"/><rect x="304" y="467" width="5" height="25" fill="#00ff00"/><rect x="305" y="468" width="3" height="23" fill="#fff"/><rect x="314" y="418" width="1" height="77" fill="#00ff00"/><rect x="312" y="426" width="5" height="65" fill="#00ff00"/><rect x="313" y="427" width="3" height="63" fill="#000"/><rect x="322" y="341" width="1" height="98" fill="#00ff00"/><rect x="320" y="354" width="5" height="73" fill="#00ff00"/><rect x="321" y="355" width="3" height="71" fill="#000"/><rect x="330" y="329" width="1" height="51" fill="#00ff00"/><rect x="328" y="354" width="5" height="20" fill="#00ff00"/><rect x="329" y="355" width="3" height="18" fill="#fff"/><rect x="338" y="327" width="1" height="52" fill="#00ff00"/><rect x="336" y="364" width="5" height="10" fill="#00ff00"/><rect x="337" y="365" width="3" height="8" fill="#000"/><rect x="346" y="337" width="1" height="46" fill="#00ff00"/><rect x="344" y="358" width="5" height="7" fill="#00ff00"/><rect x="345" y="359" width="3" height="5" fill="#000"/><rect x="354" y="281" width="1" height="83" fill="#00ff00"/><rect x="352" y="297" width="5" height="62" fill="#00ff00"/><rect x="353" y="298" width="3" height="60" fill="#000"/><rect x="362" y="271" width="1" height="30" fill="#00ff00"/><rect x="360" y="282" width="5" height="16" fill="#00ff00"/><rect x="361" y="283" width="3" height="14" fill="#000"/><rect x="370" y="230" width="1" height="71" fill="#00ff00"/><rect x="368" y="239" width="5" height="44" fill="#00ff00"/><rect x="369" y="240" width="3" height="42" fill="#000"/><rect x="378" y="236" width="1" height="91" fill="#00ff00"/><rect x="376" y="239" width="5" height="86" fill="#00ff00"/><rect x="377" y="240" width="3" height="84" fill="#fff"/><rect x="386" y="307" width="1" height="64" fill="#00ff00"/><rect x="384" y="324" width="5" height="42" fill="#00ff00"/><rect x="385" y="325" width="3" height="40" fill="#fff"/><rect x="394" y="287" width="1" height="95" fill="#00ff00"/><rect x="392" y="296" width="5" height="70" fill="#00ff00"/><rect x="393" y="297" width="3" height="68" fill="#000"/><rect x="402" y="234" width="1" height="74" fill="#00ff00"/><rect x="400" y="280" width="5" height="17" fill="#00ff00"/><rect x="401" y="281" width="3" height="15" fill="#000"/><rect x="410" y="236" width="1" height="72" fill="#00ff00"/><rect x="408" y="280" width="5" height="24" fill="#00ff00"/><rect x="409" y="281" width="3" height="22" fill="#fff"/><rect x="418" y="288" width="1" height="68" fill="#00ff00"/><rect x="416" y="303" width="5" height="27" fill="#00ff00"/><rect x="417" y="304" width="3" height="25" fill="#fff"/><rect x="426" y="256" width="1" height="101" fill="#00ff00"/><rect x="424" y="266" width="5" height="65" fill="#00ff00"/><rect x="425" y="267" width="3" height="63" fill="#000"/><rect x="434" y="226" width="1" height="72" fill="#00ff00"/><rect x="432" y="243" width="5" height="24" fill="#00ff00"/><rect x="433" y="244" width="3" height="22" fill="#000"/><rect x="442" y="234" width="1" height="78" fill="#00ff00"/><rect x="440" y="243" width="5" height="55" fill="#00ff00"/><rect x="441" y="244" width="3" height="53" fill="#fff"/><rect x="450" y="283" width="1" height="57" fill="#00ff00"/><rect x="448" y="297" width="5" height="38" fill="#00ff00"/><rect x="449" y="298" width="3" height="36" fill="#fff"/><rect x="458" y="331" width="1" height="44" fill="#00ff00"/><rect x="456" y="334" width="5" height="16" fill="#00ff00"/><rect x="457" y="335" width="3" height="14" fill="#fff"/><rect x="466" y="343" width="1" height="79" fill="#00ff00"/><rect x="464" y="349" width="5" height="63" fill="#00ff00"/><rect x="465" y="350" width="3" height="61" fill="#fff"/><rect x="474" y="404" width="1" height="43" fill="#00ff00"/><rect x="472" y="411" width="5" height="18" fill="#00ff00"/><rect x="473" y="412" width="3" height="16" fill="#fff"/><rect x="482" y="401" width="1" height="134" fill="#00ff00"/><rect x="480" y="428" width="5" height="79" fill="#00ff00"/><rect x="481" y="429" width="3" height="77" fill="#fff"/><rect x="490" y="488" width="1" height="66" fill="#00ff00"/><rect x="488" y="506" width="5" height="38" fill="#00ff00"/><rect x="489" y="507" width="3" height="36" fill="#fff"/><rect x="498" y="524" width="1" height="46" fill="#00ff00"/><rect x="496" y="543" width="5" height="19" fill="#00ff00"/><rect x="497" y="544" width="3" height="17" fill="#fff"/><rect x="506" y="533" width="1" height="48" fill="#00ff00"/><rect x="504" y="537" width="5" height="24" fill="#00ff00"/><rect x="505" y="538" width="3" height="22" fill="#000"/><rect x="514" y="519" width="1" height="90" fill="#00ff00"/><rect x="512" y="538" width="5" height="28" fill="#00ff00"/><rect x="513" y="539" width="3" height="26" fill="#fff"/><rect x="522" y="492" width="1" height="75" fill="#00ff00"/><rect x="520" y="522" width="5" height="43" fill="#00ff00"/><rect x="521" y="523" width="3" height="41" fill="#000"/><rect x="530" y="445" width="1" height="97" fill="#00ff00"/><rect x="528" y="496" width="5" height="28" fill="#00ff00"/><rect x="529" y="497" width="3" height="26" fill="#000"/><rect x="538" y="429" width="1" height="85" fill="#00ff00"/><rect x="536" y="464" width="5" height="32" fill="#00ff00"/><rect x="537" y="465" width="3" height="30" fill="#000"/><rect x="546" y="452" width="1" height="94" fill="#00ff00"/><rect x="544" y="462" width="5" height="60" fill="#00ff00"/><rect x="545" y="463" width="3" height="58" fill="#fff"/><rect x="554" y="518" width="1" height="80" fill="#00ff00"/><rect x="552" y="521" width="5" height="74" fill="#00ff00"/><rect x="553" y="522" width="3" height="72" fill="#fff"/><rect x="562" y="575" width="1" height="54" fill="#00ff00"/><rect x="560" y="580" width="5" height="15" fill="#00ff00"/><rect x="561" y="581" width="3" height="13" fill="#000"/><rect x="570" y="575" width="1" height="47" fill="#00ff00"/><rect x="568" y="581" width="5" height="33" fill="#00ff00"/><rect x="569" y="582" width="3" height="31" fill="#fff"/><rect x="578" y="547" width="1" height="90" fill="#00ff00"/><rect x="576" y="557" width="5" height="57" fill="#00ff00"/><rect x="577" y="558" width="3" height="55" fill="#000"/><rect x="586" y="536" width="1" height="72" fill="#00ff00"/><rect x="584" y="557" width="5" height="32" fill="#00ff00"/><rect x="585" y="558" width="3" height="30" fill="#fff"/><rect x="594" y="574" width="1" height="73" fill="#00ff00"/><rect x="592" y="587" width="5" height="50" fill="#00ff00"/><rect x="593" y="588" width="3" height="48" fill="#fff"/><rect x="602" y="611" width="1" height="51" fill="#00ff00"/><rect x="600" y="636" width="5" height="18" fill="#00ff00"/><rect x="601" y="637" width="3" height="16" fill="#fff"/><rect x="610" y="642" width="1" height="96" fill="#00ff00"/><rect x="608" y="653" width="5" height="76" fill="#00ff00"/><rect x="609" y="654" width="3" height="74" fill="#fff"/><rect x="618" y="660" width="1" height="81" fill="#00ff00"/><rect x="616" y="673" width="5" height="55" fill="#00ff00"/><rect x="617" y="674" width="3" height="53" fill="#000"/><rect x="626" y="659" width="1" height="60" fill="#00ff00"/><rect x="624" y="673" width="5" height="21" fill="#00ff00"/><rect x="625" y="674" width="3" height="19" fill="#fff"/><rect x="634" y="624" width="1" height="111" fill="#00ff00"/><rect x="632" y="634" width="5" height="59" fill="#00ff00"/><rect x="633" y="635" width="3" height="57" fill="#000"/><rect x="642" y="540" width="1" height="109" fill="#00ff00"/><rect x="640" y="586" width="5" height="48" fill="#00ff00"/><rect x="641" y="587" width="3" height="46" fill="#000"/><rect x="650" y="474" width="1" height="139" fill="#00ff00"/><rect x="648" y="485" width="5" height="102" fill="#00ff00"/><rect x="649" y="486" width="3" height="100" fill="#000"/><rect x="658" y="393" width="1" height="101" fill="#00ff00"/><rect x="656" y="431" width="5" height="56" fill="#00ff00"/><rect x="657" y="432" width="3" height="54" fill="#000"/><rect x="666" y="408" width="1" height="68" fill="#00ff00"/><rect x="664" y="431" width="5" height="44" fill="#00ff00"/><rect x="665" y="432" width="3" height="42" fill="#fff"/><rect x="674" y="433" width="1" height="85" fill="#00ff00"/><rect x="672" y="436" width="5" height="37" fill="#00ff00"/><rect x="673" y="437" width="3" height="35" fill="#000"/><rect x="682" y="383" width="1" height="86" fill="#00ff00"/><rect x="680" y="424" width="5" height="14" fill="#00ff00"/><rect x="681" y="425" width="3" height="12" fill="#000"/><rect x="690" y="310" width="1" height="154" fill="#00ff00"/><rect x="688" y="318" width="5" height="107" fill="#00ff00"/><rect x="689" y="319" width="3" height="105" fill="#000"/><rect x="698" y="233" width="1" height="98" fill="#00ff00"/><rect x="696" y="250" width="5" height="69" fill="#00ff00"/><rect x="697" y="251" width="3" height="67" fill="#000"/><rect x="706" y="228" width="1" height="68" fill="#00ff00"/><rect x="704" y="252" width="5" height="33" fill="#00ff00"/><rect x="705" y="253" width="3" height="31" fill="#fff"/><rect x="714" y="175" width="1" height="116" fill="#00ff00"/><rect x="712" y="268" width="5" height="13" fill="#00ff00"/><rect x="713" y="269" width="3" height="11" fill="#000"/><rect x="722" y="247" width="1" height="95" fill="#00ff00"/><rect x="720" y="267" width="5" height="53" fill="#00ff00"/><rect x="721" y="268" width="3" height="51" fill="#fff"/><rect x="730" y="196" width="1" height="136" fill="#00ff00"/><rect x="728" y="226" width="5" height="95" fill="#00ff00"/><rect x="729" y="227" width="3" height="93" fill="#000"/><rect x="738" y="221" width="1" height="110" fill="#00ff00"/><rect x="736" y="225" width="5" height="98" fill="#00ff00"/><rect x="737" y="226" width="3" height="96" fill="#fff"/><rect x="746" y="303" width="1" height="91" fill="#00ff00"/><rect x="744" y="321" width="5" height="3" fill="#00ff00"/><rect x="745" y="322" width="3" height="1" fill="#fff"/><rect x="754" y="221" width="1" height="124" fill="#00ff00"/><rect x="752" y="263" width="5" height="59" fill="#00ff00"/><rect x="753" y="264" width="3" height="57" fill="#000"/><rect x="762" y="226" width="1" height="84" fill="#00ff00"/><rect x="760" y="238" width="5" height="25" fill="#00ff00"/><rect x="761" y="239" width="3" height="23" fill="#000"/><rect x="770" y="234" width="1" height="161" fill="#00ff00"/><rect x="768" y="237" width="5" height="131" fill="#00ff00"/><rect x="769" y="238" width="3" height="129" fill="#fff"/><rect x="778" y="157" width="1" height="223" fill="#00ff00"/><rect x="776" y="316" width="5" height="54" fill="#00ff00"/><rect x="777" y="317" width="3" height="52" fill="#000"/><rect x="786" y="242" width="1" height="128" fill="#00ff00"/><rect x="784" y="318" width="5" height="36" fill="#00ff00"/><rect x="785" y="319" width="3" height="34" fill="#fff"/><rect x="794" y="242" width="1" height="133" fill="#00ff00"/><rect x="792" y="266" width="5" height="88" fill="#00ff00"/><rect x="793" y="267" width="3" height="86" fill="#000"/><rect x="802" y="209" width="1" height="65" fill="#00ff00"/><rect x="800" y="250" width="5" height="17" fill="#00ff00"/><rect x="801" y="251" width="3" height="15" fill="#000"/><rect x="810" y="223" width="1" height="127" fill="#00ff00"/><rect x="808" y="251" width="5" height="88" fill="#00ff00"/><rect x="809" y="252" width="3" height="86" fill="#fff"/><rect x="818" y="324" width="1" height="60" fill="#00ff00"/><rect x="816" y="340" width="5" height="39" fill="#00ff00"/><rect x="817" y="341" width="3" height="37" fill="#fff"/><rect x="826" y="353" width="1" height="57" fill="#00ff00"/><rect x="824" y="366" width="5" height="13" fill="#00ff00"/><rect x="825" y="367" width="3" height="11" fill="#000"/><rect x="834" y="354" width="1" height="144" fill="#00ff00"/><rect x="832" y="366" width="5" height="116" fill="#00ff00"/><rect x="833" y="367" width="3" height="114" fill="#fff"/><rect x="842" y="427" width="1" height="94" fill="#00ff00"/><rect x="840" y="472" width="5" height="11" fill="#00ff00"/><rect x="841" y="473" width="3" height="9" fill="#000"/><rect x="850" y="454" width="1" height="96" fill="#00ff00"/><rect x="848" y="472" width="5" height="59" fill="#00ff00"/><rect x="849" y="473" width="3" height="57" fill="#fff"/><rect x="858" y="395" width="1" height="148" fill="#00ff00"/><rect x="856" y="438" width="5" height="94" fill="#00ff00"/><rect x="857" y="439" width="3" height="92" fill="#000"/><rect x="866" y="368" width="1" height="90" fill="#00ff00"/><rect x="864" y="391" width="5" height="48" fill="#00ff00"/><rect x="865" y="392" width="3" height="46" fill="#000"/><rect x="874" y="332" width="1" height="72" fill="#00ff00"/><rect x="872" y="340" width="5" height="52" fill="#00ff00"/><rect x="873" y="341" width="3" height="50" fill="#000"/><rect x="882" y="313" width="1" height="54" fill="#00ff00"/><rect x="880" y="340" width="5" height="3" fill="#00ff00"/><rect x="881" y="341" width="3" height="1" fill="#fff"/><rect x="890" y="328" width="1" height="75" fill="#00ff00"/><rect x="888" y="343" width="5" height="46" fill="#00ff00"/><rect x="889" y="344" width="3" height="44" fill="#fff"/><rect x="898" y="365" width="1" height="112" fill="#00ff00"/><rect x="896" y="388" width="5" height="79" fill="#00ff00"/><rect x="897" y="389" width="3" height="77" fill="#fff"/><rect x="906" y="449" width="1" height="66" fill="#00ff00"/><rect x="904" y="466" width="5" height="21" fill="#00ff00"/><rect x="905" y="467" width="3" height="19" fill="#fff"/><rect x="914" y="475" width="1" height="41" fill="#00ff00"/><rect x="912" y="486" width="5" height="7" fill="#00ff00"/><rect x="913" y="487" width="3" height="5" fill="#fff"/><rect x="922" y="472" width="1" height="51" fill="#00ff00"/><rect x="920" y="478" width="5" height="15" fill="#00ff00"/><rect x="921" y="479" width="3" height="13" fill="#000"/><rect x="930" y="456" width="1" height="78" fill="#00ff00"/><rect x="928" y="478" width="5" height="17" fill="#00ff00"/><rect x="929" y="479" width="3" height="15" fill="#fff"/><rect x="938" y="424" width="1" height="87" fill="#00ff00"/><rect x="936" y="490" width="5" height="4" fill="#00ff00"/><rect x="937" y="491" width="3" height="2" fill="#000"/><rect x="946" y="410" width="1" height="89" fill="#00ff00"/><rect x="944" y="425" width="5" height="66" fill="#00ff00"/><rect x="945" y="426" width="3" height="64" fill="#000"/><rect x="954" y="359" width="1" height="91" fill="#00ff00"/><rect x="952" y="378" width="5" height="48" fill="#00ff00"/><rect x="953" y="379" width="3" height="46" fill="#000"/><rect x="962" y="369" width="1" height="121" fill="#00ff00"/><rect x="960" y="378" width="5" height="96" fill="#00ff00"/><rect x="961" y="379" width="3" height="94" fill="#fff"/><rect x="970" y="453" width="1" height="69" fill="#00ff00"/><rect x="968" y="459" width="5" height="15" fill="#00ff00"/><rect x="969" y="460" width="3" height="13" fill="#000"/><rect x="978" y="398" width="1" height="67" fill="#00ff00"/><rect x="976" y="443" width="5" height="16" fill="#00ff00"/><rect x="977" y="444" width="3" height="14" fill="#000"/><rect x="986" y="398" width="1" height="82" fill="#00ff00"/><rect x="984" y="426" width="5" height="17" fill="#00ff00"/><rect x="985" y="427" width="3" height="15" fill="#000"/><rect x="994" y="358" width="1" height="87" fill="#00ff00"/><rect x="992" y="385" width="5" height="42" fill="#00ff00"/><rect x="993" y="386" width="3" height="40" fill="#000"/><rect x="1002" y="234" width="1" height="156" fill="#00ff00"/><rect x="1000" y="262" width="5" height="124" fill="#00ff00"/><rect x="1001" y="263" width="3" height="122" fill="#000"/><rect x="1010" y="221" width="1" height="69" fill="#00ff00"/><rect x="1008" y="262" width="5" height="11" fill="#00ff00"/><rect x="1009" y="263" width="3" height="9" fill="#fff"/><rect x="1018" y="214" width="1" height="62" fill="#00ff00"/><rect x="1016" y="256" width="5" height="16" fill="#00ff00"/><rect x="1017" y="257" width="3" height="14" fill="#000"/><rect x="1026" y="247" width="1" height="84" fill="#00ff00"/><rect x="1024" y="256" width="5" height="40" fill="#00ff00"/><rect x="1025" y="257" width="3" height="38" fill="#fff"/><rect x="1034" y="267" width="1" height="56" fill="#00ff00"/><rect x="1032" y="295" width="5" height="22" fill="#00ff00"/><rect x="1033" y="296" width="3" height="20" fill="#fff"/><rect x="1042" y="252" width="1" height="84" fill="#00ff00"/><rect x="1040" y="298" width="5" height="18" fill="#00ff00"/><rect x="1041" y="299" width="3" height="16" fill="#000"/><rect x="1050" y="240" width="1" height="84" fill="#00ff00"/><rect x="1048" y="252" width="5" height="47" fill="#00ff00"/><rect x="1049" y="253" width="3" height="45" fill="#000"/><rect x="1058" y="239" width="1" height="160" fill="#00ff00"/><rect x="1056" y="252" width="5" height="139" fill="#00ff00"/><rect x="1057" y="253" width="3" height="137" fill="#fff"/><rect x="1066" y="369" width="1" height="85" fill="#00ff00"/><rect x="1064" y="391" width="5" height="45" fill="#00ff00"/><rect x="1065" y="392" width="3" height="43" fill="#fff"/><rect x="1074" y="379" width="1" height="90" fill="#00ff00"/><rect x="1072" y="435" width="5" height="24" fill="#00ff00"/><rect x="1073" y="436" width="3" height="22" fill="#fff"/><rect x="1082" y="425" width="1" height="64" fill="#00ff00"/><rect x="1080" y="458" width="5" height="21" fill="#00ff00"/><rect x="1081" y="459" width="3" height="19" fill="#fff"/><rect x="1090" y="449" width="1" height="53" fill="#00ff00"/><rect x="1088" y="460" width="5" height="19" fill="#00ff00"/><rect x="1089" y="461" width="3" height="17" fill="#000"/><rect x="1098" y="437" width="1" height="102" fill="#00ff00"/><rect x="1096" y="460" width="5" height="49" fill="#00ff00"/><rect x="1097" y="461" width="3" height="47" fill="#fff"/><rect x="1106" y="452" width="1" height="133" fill="#00ff00"/><rect x="1104" y="508" width="5" height="58" fill="#00ff00"/><rect x="1105" y="509" width="3" height="56" fill="#fff"/><rect x="1114" y="529" width="1" height="53" fill="#00ff00"/><rect x="1112" y="548" width="5" height="17" fill="#00ff00"/><rect x="1113" y="549" width="3" height="15" fill="#000"/><rect x="1122" y="536" width="1" height="46" fill="#00ff00"/><rect x="1120" y="548" width="5" height="5" fill="#00ff00"/><rect x="1121" y="549" width="3" height="3" fill="#fff"/><rect x="1130" y="544" width="1" height="59" fill="#00ff00"/><rect x="1128" y="552" width="5" height="40" fill="#00ff00"/><rect x="1129" y="553" width="3" height="38" fill="#fff"/><rect x="1138" y="528" width="1" height="96" fill="#00ff00"/><rect x="1136" y="591" width="5" height="9" fill="#00ff00"/><rect x="1137" y="592" width="3" height="7" fill="#fff"/><rect x="1146" y="467" width="1" height="142" fill="#00ff00"/><rect x="1144" y="494" width="5" height="106" fill="#00ff00"/><rect x="1145" y="495" width="3" height="104" fill="#000"/><rect x="1154" y="439" width="1" height="66" fill="#00ff00"/><rect x="1152" y="482" width="5" height="13" fill="#00ff00"/><rect x="1153" y="483" width="3" height="11" fill="#000"/><rect x="1162" y="457" width="1" height="84" fill="#00ff00"/><rect x="1160" y="482" width="5" height="50" fill="#00ff00"/><rect x="1161" y="483" width="3" height="48" fill="#fff"/><rect x="1170" y="475" width="1" height="97" fill="#00ff00"/><rect x="1168" y="476" width="5" height="55" fill="#00ff00"/><rect x="1169" y="477" width="3" height="53" fill="#000"/><rect x="1178" y="450" width="1" height="83" fill="#00ff00"/><rect x="1176" y="476" width="5" height="17" fill="#00ff00"/><rect x="1177" y="477" width="3" height="15" fill="#fff"/><rect x="1186" y="478" width="1" height="85" fill="#00ff00"/><rect x="1184" y="492" width="5" height="61" fill="#00ff00"/><rect x="1185" y="493" width="3" height="59" fill="#fff"/><rect x="1194" y="537" width="1" height="55" fill="#00ff00"/><rect x="1192" y="553" width="5" height="13" fill="#00ff00"/><rect x="1193" y="554" width="3" height="11" fill="#fff"/><rect x="1202" y="565" width="1" height="52" fill="#00ff00"/><rect x="1200" y="565" width="5" height="28" fill="#00ff00"/><rect x="1201" y="566" width="3" height="26" fill="#fff"/><rect x="1210" y="574" width="1" height="67" fill="#00ff00"/><rect x="1208" y="592" width="5" height="40" fill="#00ff00"/><rect x="1209" y="593" width="3" height="38" fill="#fff"/><rect x="1218" y="622" width="1" height="33" fill="#00ff00"/><rect x="1216" y="626" width="5" height="6" fill="#00ff00"/><rect x="1217" y="627" width="3" height="4" fill="#000"/><rect x="1226" y="530" width="1" height="109" fill="#00ff00"/><rect x="1224" y="534" width="5" height="92" fill="#00ff00"/><rect x="1225" y="535" width="3" height="90" fill="#000"/><rect x="1234" y="514" width="1" height="46" fill="#00ff00"/><rect x="1232" y="534" width="5" height="9" fill="#00ff00"/><rect x="1233" y="535" width="3" height="7" fill="#fff"/><rect x="1242" y="492" width="1" height="52" fill="#00ff00"/><rect x="1240" y="505" width="5" height="39" fill="#00ff00"/><rect x="1241" y="506" width="3" height="37" fill="#000"/><rect x="1250" y="442" width="1" height="72" fill="#00ff00"/><rect x="1248" y="452" width="5" height="54" fill="#00ff00"/><rect x="1249" y="453" width="3" height="52" fill="#000"/><rect x="1258" y="447" width="1" height="65" fill="#00ff00"/><rect x="1256" y="452" width="5" height="47" fill="#00ff00"/><rect x="1257" y="453" width="3" height="45" fill="#fff"/><rect x="1266" y="445" width="1" height="67" fill="#00ff00"/><rect x="1264" y="498" width="5" height="10" fill="#00ff00"/><rect x="1265" y="499" width="3" height="8" fill="#fff"/><rect x="1274" y="466" width="1" height="103" fill="#00ff00"/><rect x="1272" y="507" width="5" height="55" fill="#00ff00"/><rect x="1273" y="508" width="3" height="53" fill="#fff"/><rect x="1282" y="489" width="1" height="114" fill="#00ff00"/><rect x="1280" y="511" width="5" height="51" fill="#00ff00"/><rect x="1281" y="512" width="3" height="49" fill="#000"/><rect x="1290" y="484" width="1" height="100" fill="#00ff00"/><rect x="1288" y="511" width="5" height="49" fill="#00ff00"/><rect x="1289" y="512" width="3" height="47" fill="#fff"/><rect x="1298" y="503" width="1" height="81" fill="#00ff00"/><rect x="1296" y="521" width="5" height="39" fill="#00ff00"/><rect x="1297" y="522" width="3" height="37" fill="#000"/><rect x="1306" y="510" width="1" height="74" fill="#00ff00"/><rect x="1304" y="522" width="5" height="46" fill="#00ff00"/><rect x="1305" y="523" width="3" height="44" fill="#fff"/><rect x="1314" y="541" width="1" height="57" fill="#00ff00"/><rect x="1312" y="567" width="5" height="3" fill="#00ff00"/><rect x="1313" y="568" width="3" height="1" fill="#fff"/><rect x="1322" y="550" width="1" height="49" fill="#00ff00"/><rect x="1320" y="568" width="5" height="3" fill="#00ff00"/><rect x="1321" y="569" width="3" height="1" fill="#fff"/><rect x="1330" y="547" width="1" height="44" fill="#00ff00"/><rect x="1328" y="567" width="5" height="17" fill="#00ff00"/><rect x="1329" y="568" width="3" height="15" fill="#fff"/><rect x="1338" y="574" width="1" height="33" fill="#00ff00"/><rect x="1336" y="581" width="5" height="14" fill="#00ff00"/><rect x="1337" y="582" width="3" height="12" fill="#fff"/><rect x="1346" y="552" width="1" height="66" fill="#00ff00"/><rect x="1344" y="557" width="5" height="34" fill="#00ff00"/><rect x="1345" y="558" width="3" height="32" fill="#000"/><rect x="1354" y="519" width="1" height="44" fill="#00ff00"/><rect x="1352" y="544" width="5" height="14" fill="#00ff00"/><rect x="1353" y="545" width="3" height="12" fill="#000"/><rect x="1362" y="526" width="1" height="37" fill="#00ff00"/><rect x="1360" y="532" width="5" height="13" fill="#00ff00"/><rect x="1361" y="533" width="3" height="11" fill="#000"/><rect x="1370" y="532" width="1" height="74" fill="#00ff00"/><rect x="1368" y="532" width="5" height="58" fill="#00ff00"/><rect x="1369" y="533" width="3" height="56" fill="#fff"/><rect x="1378" y="536" width="1" height="83" fill="#00ff00"/><rect x="1376" y="546" width="5" height="45" fill="#00ff00"/><rect x="1377" y="547" width="3" height="43" fill="#000"/><rect x="1386" y="478" width="1" height="119" fill="#00ff00"/><rect x="1384" y="492" width="5" height="56" fill="#00ff00"/><rect x="1385" y="493" width="3" height="54" fill="#000"/><rect x="1394" y="464" width="1" height="32" fill="#00ff00"/><rect x="1392" y="479" width="5" height="14" fill="#00ff00"/><rect x="1393" y="480" width="3" height="12" fill="#000"/><rect x="1402" y="448" width="1" height="48" fill="#00ff00"/><rect x="1400" y="478" width="5" height="7" fill="#00ff00"/><rect x="1401" y="479" width="3" height="5" fill="#fff"/><rect x="1410" y="427" width="1" height="76" fill="#00ff00"/><rect x="1408" y="432" width="5" height="53" fill="#00ff00"/><rect x="1409" y="433" width="3" height="51" fill="#000"/><rect x="1418" y="377" width="1" height="61" fill="#00ff00"/><rect x="1416" y="394" width="5" height="38" fill="#00ff00"/><rect x="1417" y="395" width="3" height="36" fill="#000"/><rect x="1426" y="340" width="1" height="61" fill="#00ff00"/><rect x="1424" y="359" width="5" height="36" fill="#00ff00"/><rect x="1425" y="360" width="3" height="34" fill="#000"/><rect x="1434" y="354" width="1" height="66" fill="#00ff00"/><rect x="1432" y="359" width="5" height="51" fill="#00ff00"/><rect x="1433" y="360" width="3" height="49" fill="#fff"/><rect x="1442" y="361" width="1" height="71" fill="#00ff00"/><rect x="1440" y="394" width="5" height="17" fill="#00ff00"/><rect x="1441" y="395" width="3" height="15" fill="#000"/><rect x="1450" y="385" width="1" height="59" fill="#00ff00"/><rect x="1448" y="390" width="5" height="37" fill="#00ff00"/><rect x="1449" y="391" width="3" height="35" fill="#fff"/><rect x="1458" y="409" width="1" height="35" fill="#00ff00"/><rect x="1456" y="425" width="5" height="3" fill="#00ff00"/><rect x="1457" y="426" width="3" height="1" fill="#fff"/><rect x="1466" y="414" width="1" height="76" fill="#00ff00"/><rect x="1464" y="424" width="5" height="25" fill="#00ff00"/><rect x="1465" y="425" width="3" height="23" fill="#fff"/><rect x="1474" y="381" width="1" height="77" fill="#00ff00"/><rect x="1472" y="391" width="5" height="58" fill="#00ff00"/><rect x="1473" y="392" width="3" height="56" fill="#000"/><rect x="1482" y="373" width="1" height="98" fill="#00ff00"/><rect x="1480" y="391" width="5" height="66" fill="#00ff00"/><rect x="1481" y="392" width="3" height="64" fill="#fff"/><rect x="1490" y="425" width="1" height="86" fill="#00ff00"/><rect x="1488" y="437" width="5" height="20" fill="#00ff00"/><rect x="1489" y="438" width="3" height="18" fill="#000"/><rect x="1498" y="418" width="1" height="54" fill="#00ff00"/><rect x="1496" y="436" width="5" height="8" fill="#00ff00"/><rect x="1497" y="437" width="3" height="6" fill="#fff"/><rect x="1506" y="442" width="1" height="98" fill="#00ff00"/><rect x="1504" y="444" width="5" height="88" fill="#00ff00"/><rect x="1505" y="445" width="3" height="86" fill="#fff"/><rect x="1514" y="518" width="1" height="72" fill="#00ff00"/><rect x="1512" y="531" width="5" height="52" fill="#00ff00"/><rect x="1513" y="532" width="3" height="50" fill="#fff"/><rect x="1522" y="552" width="1" height="38" fill="#00ff00"/><rect x="1520" y="556" width="5" height="28" fill="#00ff00"/><rect x="1521" y="557" width="3" height="26" fill="#000"/><polyline fill="none" stroke="#3cb371" stroke-width="1" points="283.0,351.0 305.0,355.0 315.0,354.0 322.5,342.5 330.0,340.0 345.0,332.5 355.0,315.0 375.0,261.0 386.0,256.0 402.5,235.0 417.5,225.0 434.5,200.4 442.5,197.9 450.5,201.8 458.5,210.4 466.5,224.6 474.5,224.2 482.5,204.6 490.5,184.1 498.5,167.0 506.5,158.7 514.5,155.5 522.5,162.5 530.5,181.0 538.5,188.8 546.5,191.7 554.5,200.0 562.5,216.3 570.5,229.8 578.5,245.3 586.5,276.3 594.5,318.1 602.5,351.4 610.5,371.9 618.5,404.0 626.5,423.2 634.5,447.1 642.5,455.7 650.5,446.7 658.5,425.1 666.5,416.2 674.5,398.6 682.5,383.4 690.5,346.5 698.5,299.6 706.5,262.7 714.5,224.8 722.5,201.2 730.5,163.6 738.5,146.3 746.5,131.5 754.5,127.0 762.5,127.0 770.5,127.0 778.5,127.0 786.5,144.2 794.5,159.4 802.5,173.3 810.5,182.7 818.5,186.5 826.5,198.6 834.5,190.4 842.5,183.4 850.5,166.2 858.5,173.5 866.5,179.6 874.5,187.0 882.5,188.7 890.5,206.6 898.5,207.8 906.5,208.8 914.5,220.7 922.5,242.6 930.5,244.0 938.5,253.8 946.5,259.7 954.5,279.7 962.5,313.0 970.5,326.6 978.5,333.4 986.5,341.8 994.5,335.3 1002.5,300.6 1010.5,279.2 1018.5,253.9 1026.5,241.6 1034.5,238.2 1042.5,231.7 1050.5,213.0 1058.5,212.5 1066.5,214.3 1074.5,216.1 1082.5,216.1 1090.5,218.3 1098.5,216.6 1106.5,206.4 1114.5,202.8 1122.5,198.0 1130.5,189.8 1138.5,182.8 1146.5,183.8 1154.5,187.8 1162.5,209.4 1170.5,232.4 1178.5,262.6 1186.5,287.2 1194.5,310.5 1202.5,342.2 1210.5,398.3 1218.5,417.1 1226.5,431.0 1234.5,441.6 1242.5,445.7 1250.5,444.0 1258.5,442.7 1266.5,439.4 1274.5,439.6 1282.5,437.0 1290.5,438.0 1298.5,438.4 1306.5,442.5 1314.5,449.1 1322.5,450.2 1330.5,459.1 1338.5,465.8 1346.5,466.0 1354.5,465.0 1362.5,463.8 1370.5,468.2 1378.5,473.3 1386.5,467.9 1394.5,460.0 1402.5,456.7 1410.5,451.0 1418.5,426.6 1426.5,395.3 1434.5,380.0 1442.5,364.2 1450.5,355.2 1458.5,347.2 1466.5,343.4 1474.5,333.0 1482.5,332.4 1490.5,332.8 1498.5,337.5 1506.5,339.6 1514.5,335.3 1522.5,333.4"/><polyline fill="none" stroke="#3cb371" stroke-width="1" points="283.0,432.7 306.0,439.5 326.6,425.0 357.7,404.0 370.0,390.0 392.5,372.5 410.0,360.0 425.0,355.0 434.5,347.7 442.5,340.6 450.5,334.5 458.5,328.6 466.5,324.6 474.5,324.7 482.5,332.4 490.5,340.9 498.5,350.7 506.5,359.7 514.5,373.1 522.5,385.1 530.5,398.0 538.5,404.9 546.5,412.7 554.5,427.6 562.5,442.6 570.5,458.1 578.5,469.6 586.5,485.6 594.5,505.3 602.5,523.1 610.5,542.8 618.5,559.0 626.5,573.1 634.5,583.4 642.5,587.4 650.5,584.5 658.5,578.0 666.5,574.9 674.5,568.4 682.5,563.5 690.5,554.6 698.5,544.0 706.5,532.1 714.5,515.8 722.5,502.7 730.5,483.4 738.5,471.6 746.5,458.3 754.5,439.7 762.5,419.0 770.5,400.9 778.5,383.0 786.5,366.0 794.5,347.6 802.5,330.9 810.5,323.5 818.5,320.8 826.5,315.4 834.5,317.7 842.5,320.1 850.5,330.7 858.5,340.1 866.5,345.4 874.5,349.0 882.5,350.2 890.5,358.3 898.5,365.5 906.5,373.7 914.5,385.1 922.5,397.1 930.5,403.4 938.5,412.1 946.5,415.8 954.5,421.3 962.5,432.4 970.5,438.5 978.5,441.8 986.5,444.8 994.5,440.0 1002.5,429.5 1010.5,416.6 1018.5,407.5 1026.5,402.7 1034.5,401.5 1042.5,399.3 1050.5,392.5 1058.5,388.7 1066.5,386.1 1074.5,384.4 1082.5,384.4 1090.5,382.7 1098.5,383.6 1106.5,390.6 1114.5,399.1 1122.5,403.1 1130.5,409.7 1138.5,417.5 1146.5,420.9 1154.5,425.7 1162.5,439.2 1170.5,449.4 1178.5,461.1 1186.5,474.0 1194.5,486.5 1202.5,501.2 1210.5,520.1 1218.5,531.9 1226.5,536.8 1234.5,541.1 1242.5,542.4 1250.5,542.0 1258.5,541.5 1266.5,538.6 1274.5,539.3 1282.5,537.3 1290.5,535.7 1298.5,531.7 1306.5,535.4 1314.5,539.8 1322.5,541.7 1330.5,547.0 1338.5,552.1 1346.5,552.4 1354.5,551.3 1362.5,548.3 1370.5,546.2 1378.5,542.2 1386.5,540.1 1394.5,536.9 1402.5,535.9 1410.5,534.8 1418.5,529.6 1426.5,522.2 1434.5,514.6 1442.5,508.8 1450.5,502.1 1458.5,497.4 1466.5,491.5 1474.5,482.6 1482.5,476.9 1490.5,469.6 1498.5,462.1 1506.5,460.8 1514.5,462.7 1522.5,463.9"/><polyline fill="none" stroke="#3cb371" stroke-width="1" points="283.0,512.0 300.7,523.0 326.6,508.0 347.0,490.0 370.7,515.6 399.0,497.5 434.5,495.0 442.5,483.2 450.5,467.2 458.5,446.9 466.5,424.7 474.5,425.2 482.5,460.1 490.5,497.6 498.5,534.4 506.5,560.7 514.5,590.7 522.5,607.7 530.5,615.0 538.5,621.0 546.5,633.8 554.5,655.3 562.5,668.9 570.5,686.5 578.5,693.8 586.5,694.9 594.5,692.4 602.5,694.8 610.5,713.7 618.5,714.0 626.5,723.0 634.5,719.7 642.5,719.1 650.5,722.3 658.5,731.0 666.5,733.6 674.5,738.3 682.5,743.7 690.5,754.0 698.5,754.0 706.5,754.0 714.5,754.0 722.5,754.0 730.5,754.0 738.5,754.0 746.5,754.0 754.5,754.0 762.5,741.4 770.5,690.8 778.5,646.5 786.5,587.9 794.5,535.9 802.5,488.5 810.5,464.4 818.5,455.2 826.5,432.3 834.5,445.0 842.5,456.7 850.5,495.1 858.5,506.6 866.5,511.2 874.5,511.0 882.5,511.7 890.5,510.0 898.5,523.2 906.5,538.6 914.5,549.5 922.5,551.6 930.5,562.9 938.5,570.5 946.5,571.8 954.5,563.0 962.5,551.9 970.5,550.3 978.5,550.1 986.5,547.7 994.5,544.7 1002.5,558.4 1010.5,554.0 1018.5,561.1 1026.5,563.9 1034.5,564.9 1042.5,566.9 1050.5,571.9 1058.5,565.0 1066.5,558.0 1074.5,552.8 1082.5,552.8 1090.5,547.2 1098.5,550.7 1106.5,574.8 1114.5,595.5 1122.5,608.2 1130.5,629.7 1138.5,652.2 1146.5,657.9 1154.5,663.6 1162.5,668.9 1170.5,666.3 1178.5,659.7 1186.5,660.9 1194.5,662.5 1202.5,660.1 1210.5,641.9 1218.5,646.7 1226.5,642.7 1234.5,640.6 1242.5,639.1 1250.5,640.1 1258.5,640.4 1266.5,637.9 1274.5,639.0 1282.5,637.5 1290.5,633.4 1298.5,625.1 1306.5,628.3 1314.5,630.4 1322.5,633.1 1330.5,634.9 1338.5,638.5 1346.5,638.8 1354.5,637.6 1362.5,632.8 1370.5,624.1 1378.5,611.0 1386.5,612.2 1394.5,613.8 1402.5,615.0 1410.5,618.6 1418.5,632.7 1426.5,649.2 1434.5,649.3 1442.5,653.3 1450.5,649.0 1458.5,647.6 1466.5,639.6 1474.5,632.2 1482.5,621.4 1490.5,606.4 1498.5,586.7 1506.5,581.9 1514.5,590.1 1522.5,594.5"/><path d="M297.5 232.5L912 128.3M618.5 740.5L1681 560.4" stroke="#ff0000" stroke-width="1"/><path d="M283 556.5H1858" stroke="#778899"/><path d="M283 573H1858" stroke="#4169e1" stroke-width="2"/><rect x="282.5" y="126.5" width="1576" height="629" fill="none" stroke="#fff"/><rect x="1859" y="148" width="2" height="1" fill="#fff"/><rect x="1859" y="197" width="2" height="1" fill="#fff"/><rect x="1859" y="246" width="2" height="1" fill="#fff"/><rect x="1859" y="295" width="2" height="1" fill="#fff"/><rect x="1859" y="344" width="2" height="1" fill="#fff"/><rect x="1859" y="393" width="2" height="1" fill="#fff"/><rect x="1859" y="442" width="2" height="1" fill="#fff"/><rect x="1859" y="491" width="2" height="1" fill="#fff"/><rect x="1859" y="540" width="2" height="1" fill="#fff"/><rect x="1859" y="589" width="2" height="1" fill="#fff"/><rect x="1859" y="638" width="2" height="1" fill="#fff"/><rect x="1859" y="687" width="2" height="1" fill="#fff"/><rect x="1859" y="736" width="2" height="1" fill="#fff"/><rect x="282" y="756" width="1" height="4" fill="#fff"/><rect x="378" y="756" width="1" height="4" fill="#fff"/><rect x="474" y="756" width="1" height="4" fill="#fff"/><rect x="570" y="756" width="1" height="4" fill="#fff"/><rect x="666" y="756" width="1" height="4" fill="#fff"/><rect x="762" y="756" width="1" height="4" fill="#fff"/><rect x="858" y="756" width="1" height="4" fill="#fff"/><rect x="954" y="756" width="1" height="4" fill="#fff"/><rect x="1050" y="756" width="1" height="4" fill="#fff"/><rect x="1146" y="756" width="1" height="4" fill="#fff"/><rect x="1242" y="756" width="1" height="4" fill="#fff"/><rect x="1338" y="756" width="1" height="4" fill="#fff"/><rect x="1434" y="756" width="1" height="4" fill="#fff"/><rect x="1530" y="756" width="1" height="4" fill="#fff"/></svg>
<div class="t" style="left:1866px;top:143px;font-size:12px;color:#fff">1.14980</div>
<div class="t" style="left:1866px;top:192px;font-size:12px;color:#fff">1.13760</div>
<div class="t" style="left:1866px;top:241px;font-size:12px;color:#fff">1.12520</div>
<div class="t" style="left:1866px;top:290px;font-size:12px;color:#fff">1.11300</div>
<div class="t" style="left:1866px;top:339px;font-size:12px;color:#fff">1.10080</div>
<div class="t" style="left:1866px;top:388px;font-size:12px;color:#fff">1.08860</div>
<div class="t" style="left:1866px;top:437px;font-size:12px;color:#fff">1.07620</div>
<div class="t" style="left:1866px;top:486px;font-size:12px;color:#fff">1.06400</div>
<div class="t" style="left:1866px;top:535px;font-size:12px;color:#fff">1.05180</div>
<div class="t" style="left:1866px;top:584px;font-size:12px;color:#fff">1.03960</div>
<div class="t" style="left:1866px;top:633px;font-size:12px;color:#fff">1.02720</div>
<div class="t" style="left:1866px;top:682px;font-size:12px;color:#fff">1.01500</div>
<div class="t" style="left:1866px;top:731px;font-size:12px;color:#fff">1.00280</div>
<div class="a" style="left:1860px;top:549px;width:57px;height:15px;background:#fff"></div>
<div class="t" style="left:1866px;top:551px;font-size:12px;color:#000">1.04776</div>
<div class="a" style="left:1860px;top:567px;width:57px;height:14px;background:#4169e1"></div>
<div class="t" style="left:1866px;top:569px;font-size:12px;color:#000">1.04347</div>
<div class="t" style="left:283px;top:761px;font-size:12px;color:#fff">15 Jun 2014</div>
<div class="t" style="left:379px;top:761px;font-size:12px;color:#fff">7 Sep 2014</div>
<div class="t" style="left:475px;top:761px;font-size:12px;color:#fff">30 Nov 2014</div>
<div class="t" style="left:571px;top:761px;font-size:12px;color:#fff">22 Feb 2015</div>
<div class="t" style="left:667px;top:761px;font-size:12px;color:#fff">17 May 2015</div>
<div class="t" style="left:763px;top:761px;font-size:12px;color:#fff">9 Aug 2015</div>
<div class="t" style="left:859px;top:761px;font-size:12px;color:#fff">1 Nov 2015</div>
<div class="t" style="left:955px;top:761px;font-size:12px;color:#fff">24 Jan 2016</div>
<div class="t" style="left:1051px;top:761px;font-size:12px;color:#fff">17 Apr 2016</div>
<div class="t" style="left:1147px;top:761px;font-size:12px;color:#fff">10 Jul 2016</div>
<div class="t" style="left:1243px;top:761px;font-size:12px;color:#fff">2 Oct 2016</div>
<div class="t" style="left:1339px;top:761px;font-size:12px;color:#fff">25 Dec 2016</div>
<div class="t" style="left:1435px;top:761px;font-size:12px;color:#fff">19 Mar 2017</div>
<svg class="a" style="left:285px;top:133px" width="10" height="7"><path d="M0 0H9.5L4.75 5.5Z" fill="#fff"/></svg>
<div class="t" style="left:300px;top:131px;font-size:12px;color:#fff;letter-spacing:-0.15px">AUDNZD,Weekly</div>
<div class="t" style="left:399px;top:131px;font-size:12.6px;color:#fff;word-spacing:0.5px">1.04100 1.04876 1.03960 1.04776</div>
<svg class="a" style="left:1536px;top:127px" width="12" height="7"><path d="M0 0H12L6 6Z" fill="#778899"/></svg>
<div class="t" style="left:291px;top:529px;font-size:12.7px;color:#fff">#51397685 buy 0.02</div>
<div class="t" style="left:291px;top:535px;font-size:12.7px;color:#fff">#51468546 buy 0.03</div>
<div class="t" style="left:291px;top:549px;font-size:12.7px;color:#fff">#51511428 buy 0.05</div>
<div class="t" style="left:291px;top:557px;font-size:12.7px;color:#fff">#51494721 buy 0.03</div>
<div class="t" style="left:291px;top:567px;font-size:12.7px;color:#fff">#51563573 buy 0.03</div>
<div class="t" style="left:291px;top:567px;font-size:12.7px;color:#fff">#51564412 buy 0.11</div>
<div class="t" style="left:291px;top:570px;font-size:12.7px;color:#fff">#51574410 buy 0.12</div>
<div class="a" style="left:1637px;top:174px;width:32px;height:1px;background:repeating-linear-gradient(90deg,#4080ff 0 3px,transparent 3px 4px)"></div>
<div class="a" style="left:1816px;top:174px;width:32px;height:1px;background:repeating-linear-gradient(90deg,#4080ff 0 3px,transparent 3px 4px)"></div>
<div class="t" style="left:1678px;top:168px;font-size:12.2px;color:#4a7fe8">www.FOREXROBOT.eu</div>
<div class="t" style="right:72px;top:179px;font-size:14.3px;color:#ffa500">Margin 180.35; StopLevel 0.0</div>
<div class="t" style="right:72px;top:194px;font-size:14.3px;color:#ffa500">Spread 3.1; TickValue 0.69</div>
<div class="t" style="right:72px;top:209px;font-size:14.3px;color:#ffa500">Swap Long -2.60 / Short -2.00</div>
<div class="t" style="right:72px;top:224px;font-size:14.3px;color:#ffa500">MinLot 0.01; Leverage 1 : 400</div>
<div class="t" style="right:72px;top:239px;font-size:14.3px;color:#ffa500">7x BUY 0.39 / 0x SELL 0.00</div>
<div class="t" style="right:72px;top:257px;font-size:15px;font-weight:bold;letter-spacing:1.3px;color:#ffa500">Profit 113.88 CHF</div>
<div class="a" style="left:278px;top:779px;width:1642px;height:27px;background:#f0f0f0"></div>
<div class="a" style="left:278px;top:780px;width:1640px;height:1px;background:#fff"></div>
<div class="a" style="left:278px;top:781px;width:1640px;height:1px;background:#000"></div>
<div class="a" style="left:641px;top:781px;width:139px;height:24px;background:#fff;border:1px solid #000;border-top:none"></div>
<div class="t" style="left:298px;top:787px;font-size:14.5px;color:#7a7a7a">USDMXN,Daily</div>
<div class="t" style="left:426px;top:787px;font-size:14.5px;color:#7a7a7a">NZDCAD,H4</div>
<div class="t" style="left:538px;top:787px;font-size:14.5px;color:#7a7a7a">EURTRY,Daily</div>
<div class="t" style="left:654px;top:787px;font-size:14.5px;color:#000">AUDNZD,Weekly</div>
<div class="t" style="left:793px;top:787px;font-size:14.5px;color:#7a7a7a">AUDCAD,M5</div>
<div class="t" style="left:905px;top:787px;font-size:14.5px;color:#7a7a7a">EURCAD,Monthly</div>
<div class="t" style="left:1045px;top:787px;font-size:14.5px;color:#7a7a7a">USDJPY,H4</div>
<div class="t" style="left:1145px;top:787px;font-size:14.5px;color:#7a7a7a">USDCAD,H1</div>
<div class="t" style="left:1253px;top:787px;font-size:14.5px;color:#7a7a7a">AUDUSD,Daily</div>
<div class="t" style="left:1378px;top:787px;font-size:14.5px;color:#7a7a7a">GBPUSD,M5</div>
<div class="t" style="left:1485px;top:787px;font-size:14.5px;color:#7a7a7a">EURUSD,H1</div>
<div class="t" style="left:1590px;top:787px;font-size:14.5px;color:#7a7a7a">EURCHF,Daily</div>
<div class="t" style="left:1709px;top:787px;font-size:14.5px;color:#7a7a7a">EURAUD,M5</div>
<div class="t" style="left:1818px;top:787px;font-size:14.5px;color:#7a7a7a">NZDCHF</div>
<div class="a" style="left:1872px;top:782px;width:46px;height:22px;background:#f0f0f0"></div>
<div class="a" style="left:412px;top:785px;width:1px;height:17px;background:#a0a0a0"></div>
<div class="a" style="left:524px;top:785px;width:1px;height:17px;background:#a0a0a0"></div>
<div class="a" style="left:892px;top:785px;width:1px;height:17px;background:#a0a0a0"></div>
<div class="a" style="left:1032px;top:785px;width:1px;height:17px;background:#a0a0a0"></div>
<div class="a" style="left:1132px;top:785px;width:1px;height:17px;background:#a0a0a0"></div>
<div class="a" style="left:1240px;top:785px;width:1px;height:17px;background:#a0a0a0"></div>
<div class="a" style="left:1365px;top:785px;width:1px;height:17px;background:#a0a0a0"></div>
<div class="a" style="left:1472px;top:785px;width:1px;height:17px;background:#a0a0a0"></div>
<div class="a" style="left:1576px;top:785px;width:1px;height:17px;background:#a0a0a0"></div>
<div class="a" style="left:1696px;top:785px;width:1px;height:17px;background:#a0a0a0"></div>
<div class="a" style="left:1804px;top:785px;width:1px;height:17px;background:#a0a0a0"></div>
<svg class="a" style="left:1876px;top:788px" width="8" height="10"><path d="M6 1L2 5L6 9Z" fill="#a0a0a0"/></svg>
<svg class="a" style="left:1902px;top:788px" width="8" height="10"><path d="M2 1L6 5L2 9Z" fill="#000"/></svg>
<div class="a" style="left:0;top:805px;width:1920px;height:1px;background:#e0e0e0"></div>
<div class="a" style="left:0;top:806px;width:1920px;height:240px;background:#f0f0f0"></div>
<svg class="a" style="left:4px;top:812px" width="12" height="12"><path d="M1.5 1.5L10.5 10.5M10.5 1.5L1.5 10.5" stroke="#000" stroke-width="1.6"/></svg>
<div class="a" style="left:3px;top:830px;width:16px;height:215px;background:linear-gradient(#d0ddeb,#b8cbe0)"></div>
<div class="t" style="left:3px;top:1045px;font-size:14px;transform:rotate(-90deg);transform-origin:0 0;width:60px;">Terminál</div>
<div class="a" style="left:20px;top:812px;width:1893px;height:206px;background:#fff;border-top:1px solid #a0a0a0;border-left:1px solid #a0a0a0"></div>
<div class="a" style="left:21px;top:838px;width:1872px;height:1px;background:#d0d0d0"></div>
<div class="a" style="left:205px;top:813px;width:1px;height:205px;background:#d8d8d8"></div>
<div class="a" style="left:462px;top:813px;width:1px;height:205px;background:#d8d8d8"></div>
<div class="a" style="left:590px;top:813px;width:1px;height:205px;background:#d8d8d8"></div>
<div class="a" style="left:689px;top:813px;width:1px;height:205px;background:#d8d8d8"></div>
<div class="a" style="left:818px;top:813px;width:1px;height:205px;background:#d8d8d8"></div>
<div class="a" style="left:960px;top:813px;width:1px;height:205px;background:#d8d8d8"></div>
<div class="a" style="left:1102px;top:813px;width:1px;height:205px;background:#d8d8d8"></div>
<div class="a" style="left:1243px;top:813px;width:1px;height:205px;background:#d8d8d8"></div>
<div class="a" style="left:1386px;top:813px;width:1px;height:205px;background:#d8d8d8"></div>
<div class="a" style="left:1528px;top:813px;width:1px;height:205px;background:#d8d8d8"></div>
<div class="a" style="left:1670px;top:813px;width:1px;height:205px;background:#d8d8d8"></div>
<div class="t" style="left:27px;top:819px">Pokyn</div>
<div class="t" style="right:1463px;top:819px">Čas</div>
<div class="t" style="right:1335px;top:819px">Typ</div>
<div class="t" style="right:1235px;top:819px">Lotů</div>
<div class="t" style="right:1128px;top:819px">Symbol</div>
<div class="t" style="right:965px;top:819px">Cena</div>
<div class="t" style="right:823px;top:819px">S / L</div>
<div class="t" style="right:681px;top:819px">Realizovat zisk</div>
<div class="t" style="right:539px;top:819px">Cena</div>
<div class="t" style="right:397px;top:819px">Provize</div>
<div class="t" style="right:255px;top:819px">Swap</div>
<div class="t" style="right:33px;top:819px">Zisk</div>
<div class="t" style="left:803px;top:820px;font-size:10px;color:#888">&#8260;</div>
<div class="a" style="left:21px;top:839px;width:1872px;height:24px;background:#fff"></div>
<div class="a" style="left:21px;top:863px;width:1872px;height:1px;background:#d4d4d4"></div>
<div class="a" style="left:205px;top:839px;width:1px;height:25px;background:#d8d8d8"></div>
<div class="a" style="left:462px;top:839px;width:1px;height:25px;background:#d8d8d8"></div>
<div class="a" style="left:590px;top:839px;width:1px;height:25px;background:#d8d8d8"></div>
<div class="a" style="left:689px;top:839px;width:1px;height:25px;background:#d8d8d8"></div>
<div class="a" style="left:818px;top:839px;width:1px;height:25px;background:#d8d8d8"></div>
<div class="a" style="left:960px;top:839px;width:1px;height:25px;background:#d8d8d8"></div>
<div class="a" style="left:1102px;top:839px;width:1px;height:25px;background:#d8d8d8"></div>
<div class="a" style="left:1243px;top:839px;width:1px;height:25px;background:#d8d8d8"></div>
<div class="a" style="left:1386px;top:839px;width:1px;height:25px;background:#d8d8d8"></div>
<div class="a" style="left:1528px;top:839px;width:1px;height:25px;background:#d8d8d8"></div>
<div class="a" style="left:1670px;top:839px;width:1px;height:25px;background:#d8d8d8"></div>
<svg class="a" style="left:24px;top:842px" width="20" height="20"><path d="M1.5 1.5h10l4 4v11h-14z" fill="#f8f8f8" stroke="#777" stroke-width="1.3"/><circle cx="14" cy="15" r="4.3" fill="#1e9be8" stroke="#0a5a9a" stroke-width=".8"/></svg>
<div class="t" style="left:48px;top:844px">51397685</div>
<div class="t" style="right:1463px;top:844px">2017.05.29 16:23:31</div>
<div class="t" style="right:1334px;top:844px">buy</div>
<div class="t" style="right:1235px;top:844px">0.02</div>
<div class="t" style="right:1107px;top:844px">audnzd</div>
<div class="t" style="right:965px;top:844px">1.05134</div>
<div class="t" style="right:823px;top:844px">0.00000</div>
<div class="t" style="right:681px;top:844px">0.00000</div>
<div class="t" style="right:538px;top:844px">1.04776</div>
<div class="t" style="right:396px;top:844px">0.00</div>
<div class="t" style="right:254px;top:844px">-0.27</div>
<div class="t" style="right:58px;top:844px">-4.93</div>
<svg class="a" style="left:1873px;top:845px" width="14" height="14"><path d="M1.5 1.5L12.5 12.5M12.5 1.5L1.5 12.5" stroke="#7a7a7a" stroke-width="1.2"/></svg>
<div class="a" style="left:21px;top:864px;width:1872px;height:24px;background:#ebebeb"></div>
<div class="a" style="left:21px;top:888px;width:1872px;height:1px;background:#d4d4d4"></div>
<div class="a" style="left:205px;top:864px;width:1px;height:25px;background:#d8d8d8"></div>
<div class="a" style="left:462px;top:864px;width:1px;height:25px;background:#d8d8d8"></div>
<div class="a" style="left:590px;top:864px;width:1px;height:25px;background:#d8d8d8"></div>
<div class="a" style="left:689px;top:864px;width:1px;height:25px;background:#d8d8d8"></div>
<div class="a" style="left:818px;top:864px;width:1px;height:25px;background:#d8d8d8"></div>
<div class="a" style="left:960px;top:864px;width:1px;height:25px;background:#d8d8d8"></div>
<div class="a" style="left:1102px;top:864px;width:1px;height:25px;background:#d8d8d8"></div>
<div class="a" style="left:1243px;top:864px;width:1px;height:25px;background:#d8d8d8"></div>
<div class="a" style="left:1386px;top:864px;width:1px;height:25px;background:#d8d8d8"></div>
<div class="a" style="left:1528px;top:864px;width:1px;height:25px;background:#d8d8d8"></div>
<div class="a" style="left:1670px;top:864px;width:1px;height:25px;background:#d8d8d8"></div>
<svg class="a" style="left:24px;top:867px" width="20" height="20"><path d="M1.5 1.5h10l4 4v11h-14z" fill="#f8f8f8" stroke="#777" stroke-width="1.3"/><circle cx="14" cy="15" r="4.3" fill="#1e9be8" stroke="#0a5a9a" stroke-width=".8"/></svg>
<div class="t" style="left:48px;top:869px">51468546</div>
<div class="t" style="right:1463px;top:869px">2017.05.31 08:59:05</div>
<div class="t" style="right:1334px;top:869px">buy</div>
<div class="t" style="right:1235px;top:869px">0.03</div>
<div class="t" style="right:1107px;top:869px">audnzd</div>
<div class="t" style="right:965px;top:869px">1.04991</div>
<div class="t" style="right:823px;top:869px">0.00000</div>
<div class="t" style="right:681px;top:869px">0.00000</div>
<div class="t" style="right:538px;top:869px">1.04776</div>
<div class="t" style="right:396px;top:869px">0.00</div>
<div class="t" style="right:254px;top:869px">-0.26</div>
<div class="t" style="right:58px;top:869px">-4.44</div>
<svg class="a" style="left:1873px;top:870px" width="14" height="14"><path d="M1.5 1.5L12.5 12.5M12.5 1.5L1.5 12.5" stroke="#7a7a7a" stroke-width="1.2"/></svg>
<div class="a" style="left:21px;top:889px;width:1872px;height:24px;background:#fff"></div>
<div class="a" style="left:21px;top:913px;width:1872px;height:1px;background:#d4d4d4"></div>
<div class="a" style="left:205px;top:889px;width:1px;height:25px;background:#d8d8d8"></div>
<div class="a" style="left:462px;top:889px;width:1px;height:25px;background:#d8d8d8"></div>
<div class="a" style="left:590px;top:889px;width:1px;height:25px;background:#d8d8d8"></div>
<div class="a" style="left:689px;top:889px;width:1px;height:25px;background:#d8d8d8"></div>
<div class="a" style="left:818px;top:889px;width:1px;height:25px;background:#d8d8d8"></div>
<div class="a" style="left:960px;top:889px;width:1px;height:25px;background:#d8d8d8"></div>
<div class="a" style="left:1102px;top:889px;width:1px;height:25px;background:#d8d8d8"></div>
<div class="a" style="left:1243px;top:889px;width:1px;height:25px;background:#d8d8d8"></div>
<div class="a" style="left:1386px;top:889px;width:1px;height:25px;background:#d8d8d8"></div>
<div class="a" style="left:1528px;top:889px;width:1px;height:25px;background:#d8d8d8"></div>
<div class="a" style="left:1670px;top:889px;width:1px;height:25px;background:#d8d8d8"></div>
<svg class="a" style="left:24px;top:892px" width="20" height="20"><path d="M1.5 1.5h10l4 4v11h-14z" fill="#f8f8f8" stroke="#777" stroke-width="1.3"/><circle cx="14" cy="15" r="4.3" fill="#1e9be8" stroke="#0a5a9a" stroke-width=".8"/></svg>
<div class="t" style="left:48px;top:894px">51494721</div>
<div class="t" style="right:1463px;top:894px">2017.06.01 15:33:10</div>
<div class="t" style="right:1334px;top:894px">buy</div>
<div class="t" style="right:1235px;top:894px">0.03</div>
<div class="t" style="right:1107px;top:894px">audnzd</div>
<div class="t" style="right:965px;top:894px">1.04443</div>
<div class="t" style="right:823px;top:894px">0.00000</div>
<div class="t" style="right:681px;top:894px">0.00000</div>
<div class="t" style="right:538px;top:894px">1.04776</div>
<div class="t" style="right:396px;top:894px">0.00</div>
<div class="t" style="right:254px;top:894px">-0.10</div>
<div class="t" style="right:58px;top:894px">6.87</div>
<svg class="a" style="left:1873px;top:895px" width="14" height="14"><path d="M1.5 1.5L12.5 12.5M12.5 1.5L1.5 12.5" stroke="#7a7a7a" stroke-width="1.2"/></svg>
<div class="a" style="left:21px;top:914px;width:1872px;height:24px;background:#ebebeb"></div>
<div class="a" style="left:21px;top:938px;width:1872px;height:1px;background:#d4d4d4"></div>
<div class="a" style="left:205px;top:914px;width:1px;height:25px;background:#d8d8d8"></div>
<div class="a" style="left:462px;top:914px;width:1px;height:25px;background:#d8d8d8"></div>
<div class="a" style="left:590px;top:914px;width:1px;height:25px;background:#d8d8d8"></div>
<div class="a" style="left:689px;top:914px;width:1px;height:25px;background:#d8d8d8"></div>
<div class="a" style="left:818px;top:914px;width:1px;height:25px;background:#d8d8d8"></div>
<div class="a" style="left:960px;top:914px;width:1px;height:25px;background:#d8d8d8"></div>
<div class="a" style="left:1102px;top:914px;width:1px;height:25px;background:#d8d8d8"></div>
<div class="a" style="left:1243px;top:914px;width:1px;height:25px;background:#d8d8d8"></div>
<div class="a" style="left:1386px;top:914px;width:1px;height:25px;background:#d8d8d8"></div>
<div class="a" style="left:1528px;top:914px;width:1px;height:25px;background:#d8d8d8"></div>
<div class="a" style="left:1670px;top:914px;width:1px;height:25px;background:#d8d8d8"></div>
<svg class="a" style="left:24px;top:917px" width="20" height="20"><path d="M1.5 1.5h10l4 4v11h-14z" fill="#f8f8f8" stroke="#777" stroke-width="1.3"/><circle cx="14" cy="15" r="4.3" fill="#1e9be8" stroke="#0a5a9a" stroke-width=".8"/></svg>
<div class="t" style="left:48px;top:919px">51511428</div>
<div class="t" style="right:1463px;top:919px">2017.06.01 07:40:24</div>
<div class="t" style="right:1334px;top:919px">buy</div>
<div class="t" style="right:1235px;top:919px">0.05</div>
<div class="t" style="right:1107px;top:919px">audnzd</div>
<div class="t" style="right:965px;top:919px">1.04627</div>
<div class="t" style="right:823px;top:919px">0.00000</div>
<div class="t" style="right:681px;top:919px">0.00000</div>
<div class="t" style="right:538px;top:919px">1.04776</div>
<div class="t" style="right:396px;top:919px">0.00</div>
<div class="t" style="right:254px;top:919px">-0.18</div>
<div class="t" style="right:58px;top:919px">5.13</div>
<svg class="a" style="left:1873px;top:920px" width="14" height="14"><path d="M1.5 1.5L12.5 12.5M12.5 1.5L1.5 12.5" stroke="#7a7a7a" stroke-width="1.2"/></svg>
<div class="a" style="left:21px;top:939px;width:1872px;height:24px;background:#fff"></div>
<div class="a" style="left:21px;top:963px;width:1872px;height:1px;background:#d4d4d4"></div>
<div class="a" style="left:205px;top:939px;width:1px;height:25px;background:#d8d8d8"></div>
<div class="a" style="left:462px;top:939px;width:1px;height:25px;background:#d8d8d8"></div>
<div class="a" style="left:590px;top:939px;width:1px;height:25px;background:#d8d8d8"></div>
<div class="a" style="left:689px;top:939px;width:1px;height:25px;background:#d8d8d8"></div>
<div class="a" style="left:818px;top:939px;width:1px;height:25px;background:#d8d8d8"></div>
<div class="a" style="left:960px;top:939px;width:1px;height:25px;background:#d8d8d8"></div>
<div class="a" style="left:1102px;top:939px;width:1px;height:25px;background:#d8d8d8"></div>
<div class="a" style="left:1243px;top:939px;width:1px;height:25px;background:#d8d8d8"></div>
<div class="a" style="left:1386px;top:939px;width:1px;height:25px;background:#d8d8d8"></div>
<div class="a" style="left:1528px;top:939px;width:1px;height:25px;background:#d8d8d8"></div>
<div class="a" style="left:1670px;top:939px;width:1px;height:25px;background:#d8d8d8"></div>
<svg class="a" style="left:24px;top:942px" width="20" height="20"><path d="M1.5 1.5h10l4 4v11h-14z" fill="#f8f8f8" stroke="#777" stroke-width="1.3"/><circle cx="14" cy="15" r="4.3" fill="#1e9be8" stroke="#0a5a9a" stroke-width=".8"/></svg>
<div class="t" style="left:48px;top:944px">51563573</div>
<div class="t" style="right:1463px;top:944px">2017.06.02 11:03:11</div>
<div class="t" style="right:1334px;top:944px">buy</div>
<div class="t" style="right:1235px;top:944px">0.03</div>
<div class="t" style="right:1107px;top:944px">audnzd</div>
<div class="t" style="right:965px;top:944px">1.04179</div>
<div class="t" style="right:823px;top:944px">0.00000</div>
<div class="t" style="right:681px;top:944px">0.00000</div>
<div class="t" style="right:538px;top:944px">1.04776</div>
<div class="t" style="right:396px;top:944px">0.00</div>
<div class="t" style="right:254px;top:944px">-0.05</div>
<div class="t" style="right:58px;top:944px">12.32</div>
<svg class="a" style="left:1873px;top:945px" width="14" height="14"><path d="M1.5 1.5L12.5 12.5M12.5 1.5L1.5 12.5" stroke="#7a7a7a" stroke-width="1.2"/></svg>
<div class="a" style="left:21px;top:964px;width:1872px;height:24px;background:#ebebeb"></div>
<div class="a" style="left:21px;top:988px;width:1872px;height:1px;background:#d4d4d4"></div>
<div class="a" style="left:205px;top:964px;width:1px;height:25px;background:#d8d8d8"></div>
<div class="a" style="left:462px;top:964px;width:1px;height:25px;background:#d8d8d8"></div>
<div class="a" style="left:590px;top:964px;width:1px;height:25px;background:#d8d8d8"></div>
<div class="a" style="left:689px;top:964px;width:1px;height:25px;background:#d8d8d8"></div>
<div class="a" style="left:818px;top:964px;width:1px;height:25px;background:#d8d8d8"></div>
<div class="a" style="left:960px;top:964px;width:1px;height:25px;background:#d8d8d8"></div>
<div class="a" style="left:1102px;top:964px;width:1px;height:25px;background:#d8d8d8"></div>
<div class="a" style="left:1243px;top:964px;width:1px;height:25px;background:#d8d8d8"></div>
<div class="a" style="left:1386px;top:964px;width:1px;height:25px;background:#d8d8d8"></div>
<div class="a" style="left:1528px;top:964px;width:1px;height:25px;background:#d8d8d8"></div>
<div class="a" style="left:1670px;top:964px;width:1px;height:25px;background:#d8d8d8"></div>
<svg class="a" style="left:24px;top:967px" width="20" height="20"><path d="M1.5 1.5h10l4 4v11h-14z" fill="#f8f8f8" stroke="#777" stroke-width="1.3"/><circle cx="14" cy="15" r="4.3" fill="#1e9be8" stroke="#0a5a9a" stroke-width=".8"/></svg>
<div class="t" style="left:48px;top:969px">51564412</div>
<div class="t" style="right:1463px;top:969px">2017.06.02 11:25:52</div>
<div class="t" style="right:1334px;top:969px">buy</div>
<div class="t" style="right:1235px;top:969px">0.11</div>
<div class="t" style="right:1107px;top:969px">audnzd</div>
<div class="t" style="right:965px;top:969px">1.04178</div>
<div class="t" style="right:823px;top:969px">0.00000</div>
<div class="t" style="right:681px;top:969px">0.00000</div>
<div class="t" style="right:538px;top:969px">1.04776</div>
<div class="t" style="right:396px;top:969px">0.00</div>
<div class="t" style="right:254px;top:969px">-0.20</div>
<div class="t" style="right:58px;top:969px">45.27</div>
<svg class="a" style="left:1873px;top:970px" width="14" height="14"><path d="M1.5 1.5L12.5 12.5M12.5 1.5L1.5 12.5" stroke="#7a7a7a" stroke-width="1.2"/></svg>
<div class="a" style="left:21px;top:989px;width:1872px;height:24px;background:#fff"></div>
<div class="a" style="left:21px;top:1013px;width:1872px;height:1px;background:#d4d4d4"></div>
<div class="a" style="left:205px;top:989px;width:1px;height:25px;background:#d8d8d8"></div>
<div class="a" style="left:462px;top:989px;width:1px;height:25px;background:#d8d8d8"></div>
<div class="a" style="left:590px;top:989px;width:1px;height:25px;background:#d8d8d8"></div>
<div class="a" style="left:689px;top:989px;width:1px;height:25px;background:#d8d8d8"></div>
<div class="a" style="left:818px;top:989px;width:1px;height:25px;background:#d8d8d8"></div>
<div class="a" style="left:960px;top:989px;width:1px;height:25px;background:#d8d8d8"></div>
<div class="a" style="left:1102px;top:989px;width:1px;height:25px;background:#d8d8d8"></div>
<div class="a" style="left:1243px;top:989px;width:1px;height:25px;background:#d8d8d8"></div>
<div class="a" style="left:1386px;top:989px;width:1px;height:25px;background:#d8d8d8"></div>
<div class="a" style="left:1528px;top:989px;width:1px;height:25px;background:#d8d8d8"></div>
<div class="a" style="left:1670px;top:989px;width:1px;height:25px;background:#d8d8d8"></div>
<svg class="a" style="left:24px;top:992px" width="20" height="20"><path d="M1.5 1.5h10l4 4v11h-14z" fill="#f8f8f8" stroke="#777" stroke-width="1.3"/><circle cx="14" cy="15" r="4.3" fill="#1e9be8" stroke="#0a5a9a" stroke-width=".8"/></svg>
<div class="t" style="left:48px;top:994px">51574410</div>
<div class="t" style="right:1463px;top:994px">2017.06.02 14:40:21</div>
<div class="t" style="right:1334px;top:994px">buy</div>
<div class="t" style="right:1235px;top:994px">0.12</div>
<div class="t" style="right:1107px;top:994px">audnzd</div>
<div class="t" style="right:965px;top:994px">1.04111</div>
<div class="t" style="right:823px;top:994px">0.00000</div>
<div class="t" style="right:681px;top:994px">0.00000</div>
<div class="t" style="right:538px;top:994px">1.04776</div>
<div class="t" style="right:396px;top:994px">0.00</div>
<div class="t" style="right:254px;top:994px">-0.21</div>
<div class="t" style="right:58px;top:994px">54.93</div>
<svg class="a" style="left:1873px;top:995px" width="14" height="14"><path d="M1.5 1.5L12.5 12.5M12.5 1.5L1.5 12.5" stroke="#7a7a7a" stroke-width="1.2"/></svg>
<div class="a" style="left:21px;top:1014px;width:1872px;height:4px;background:#fff"></div>
<div class="a" style="left:1893px;top:813px;width:19px;height:205px;background:#f0f0f0"></div>
<svg class="a" style="left:1897px;top:820px" width="11" height="7"><path d="M1 6L5.5 1.5L10 6" stroke="#606060" stroke-width="1.6" fill="none"/></svg>
<svg class="a" style="left:1897px;top:1003px" width="11" height="7"><path d="M1 1L5.5 5.5L10 1" stroke="#606060" stroke-width="1.6" fill="none"/></svg>
<div class="a" style="left:1895px;top:833px;width:16px;height:20px;background:#cdcdcd"></div>
<div class="a" style="left:20px;top:1018px;width:1894px;height:1px;background:#000"></div>
<div class="a" style="left:1914px;top:812px;width:1px;height:234px;background:#fff"></div>
<div class="a" style="left:23px;top:1018px;width:79px;height:26px;background:#fff;border:1px solid #000;border-top:none"></div>
<div class="t" style="left:36px;top:1024px;font-size:14.5px;color:#000">Obchod</div>
<div class="t" style="left:114px;top:1024px;font-size:14.5px;color:#7a7a7a">Expozice</div>
<div class="t" style="left:198px;top:1024px;font-size:14.5px;color:#7a7a7a">Historie účtu</div>
<div class="t" style="left:307px;top:1024px;font-size:14.5px;color:#7a7a7a">Zprávy</div>
<div class="t" style="left:394px;top:1024px;font-size:14.5px;color:#7a7a7a">Alarmy</div>
<div class="t" style="left:466px;top:1024px;font-size:14.5px;color:#7a7a7a">Poštovní schránka</div>
<div class="t" style="left:625px;top:1024px;font-size:14.5px;color:#7a7a7a">Obchod</div>
<div class="t" style="left:703px;top:1024px;font-size:14.5px;color:#7a7a7a">Knihovna</div>
<div class="t" style="left:789px;top:1024px;font-size:14.5px;color:#7a7a7a">Strategie</div>
<div class="t" style="left:874px;top:1024px;font-size:14.5px;color:#7a7a7a">Deník</div>
<div class="t" style="left:355px;top:1029px;font-size:11px;font-weight:bold;color:#e02020">99</div>
<div class="t" style="left:587px;top:1029px;font-size:11px;font-weight:bold;color:#e02020">75</div>
<div class="a" style="left:185px;top:1022px;width:1px;height:18px;background:#a0a0a0"></div>
<div class="a" style="left:294px;top:1022px;width:1px;height:18px;background:#a0a0a0"></div>
<div class="a" style="left:381px;top:1022px;width:1px;height:18px;background:#a0a0a0"></div>
<div class="a" style="left:453px;top:1022px;width:1px;height:18px;background:#a0a0a0"></div>
<div class="a" style="left:612px;top:1022px;width:1px;height:18px;background:#a0a0a0"></div>
<div class="a" style="left:691px;top:1022px;width:1px;height:18px;background:#a0a0a0"></div>
<div class="a" style="left:776px;top:1022px;width:1px;height:18px;background:#a0a0a0"></div>
<div class="a" style="left:861px;top:1022px;width:1px;height:18px;background:#a0a0a0"></div>
<div class="a" style="left:925px;top:1022px;width:1px;height:18px;background:#a0a0a0"></div>
<div class="a" style="left:0;top:1045px;width:1920px;height:1px;background:#fff"></div>
<div class="a" style="left:0;top:1050px;width:1920px;height:1px;background:#a0a0a0"></div>
<div class="a" style="left:0;top:1051px;width:1920px;height:1px;background:#fff"></div>
<div class="t" style="left:3px;top:1060px;font-size:14.5px">Pro pomoc, stiskněte F1</div>
<div class="a" style="left:1047px;top:1055px;width:1px;height:23px;background:#a0a0a0"></div>
<div class="a" style="left:1196px;top:1055px;width:1px;height:23px;background:#a0a0a0"></div>
<div class="a" style="left:1327px;top:1055px;width:1px;height:23px;background:#a0a0a0"></div>
<div class="a" style="left:1416px;top:1055px;width:1px;height:23px;background:#a0a0a0"></div>
<div class="a" style="left:1505px;top:1055px;width:1px;height:23px;background:#a0a0a0"></div>
<div class="a" style="left:1590px;top:1055px;width:1px;height:23px;background:#a0a0a0"></div>
<div class="a" style="left:1677px;top:1055px;width:1px;height:23px;background:#a0a0a0"></div>
<div class="a" style="left:1762px;top:1055px;width:1px;height:23px;background:#a0a0a0"></div>
<div class="t" style="left:1053px;top:1060px;font-size:14.5px">Default</div>
<svg class="a" style="left:1766px;top:1058px" width="32" height="18"><rect x="1" y="2" width="2" height="15" fill="#5a8a10"/><rect x="4" y="2" width="2" height="15" fill="#5a8a10"/><rect x="7" y="2" width="2" height="15" fill="#5a8a10"/><rect x="10" y="2" width="2" height="15" fill="#5a8a10"/><rect x="13" y="2" width="2" height="15" fill="#1e3a80"/><rect x="16" y="2" width="2" height="15" fill="#1e3a80"/><rect x="19" y="2" width="2" height="15" fill="#1e3a80"/><rect x="22" y="2" width="2" height="15" fill="#1e3a80"/><rect x="25" y="2" width="2" height="15" fill="#1e3a80"/><rect x="28" y="2" width="2" height="15" fill="#1e3a80"/></svg>
<div class="t" style="left:1803px;top:1060px;font-size:14.5px">15785/13 kb</div>
<div class="a" style="left:0;top:1078px;width:1920px;height:2px;background:#222"></div>
</body></html>
